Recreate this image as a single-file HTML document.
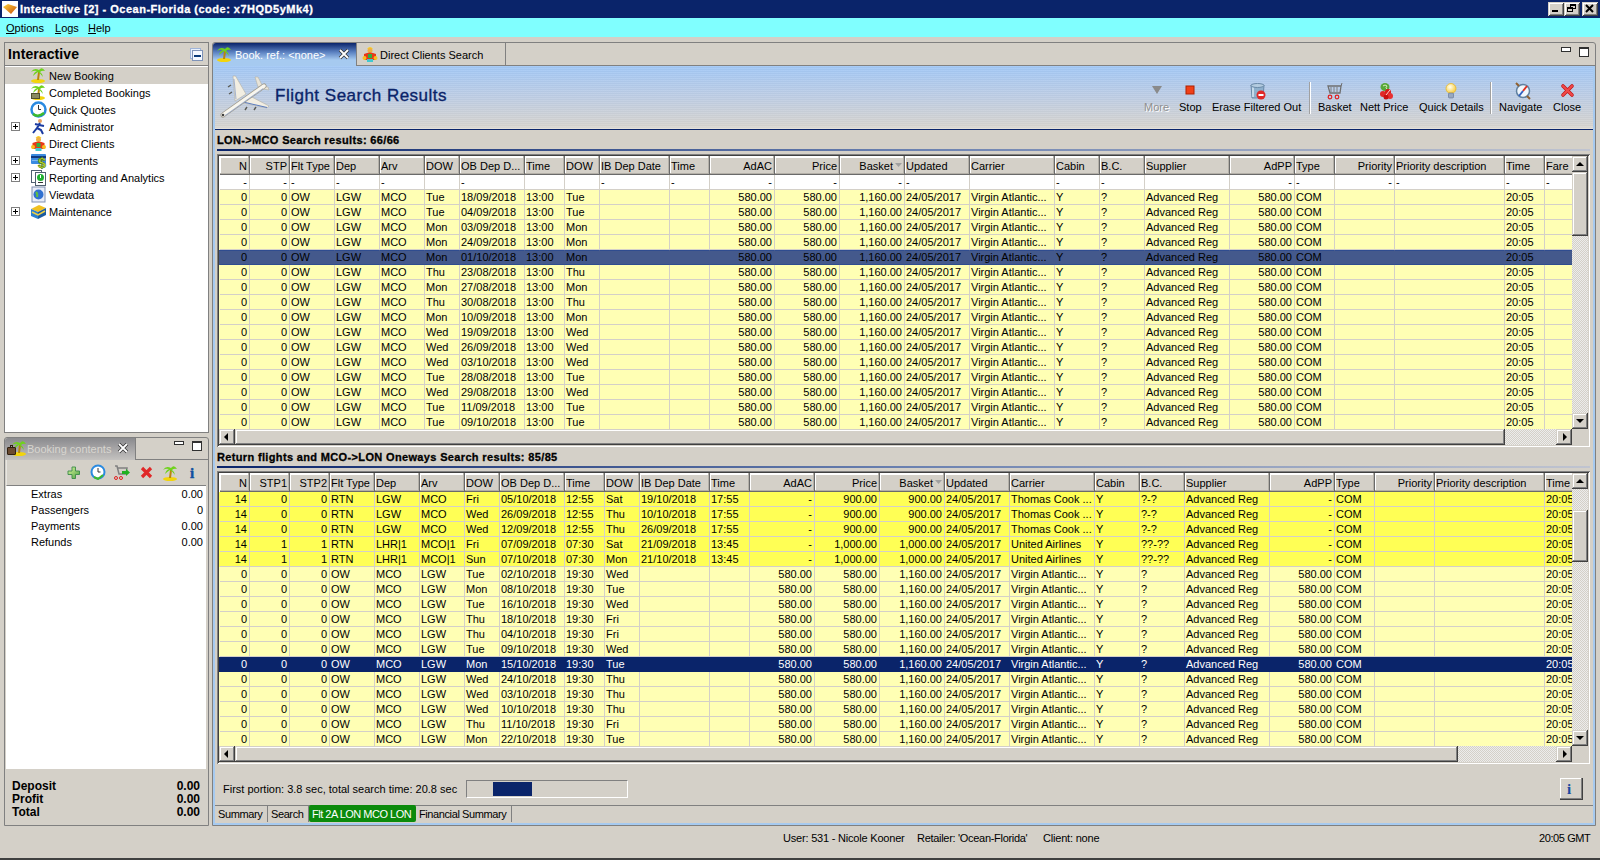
<!DOCTYPE html><html><head><meta charset="utf-8"><title>Interactive</title><style>
*{box-sizing:border-box;margin:0;padding:0}
html,body{width:1600px;height:860px;overflow:hidden}
body{position:relative;background:#d4d0c8;font-family:"Liberation Sans",sans-serif;font-size:11px;color:#000}
.a{position:absolute}
.t{position:absolute;white-space:nowrap;line-height:14px}
.b{font-weight:bold}
/* grid */
.g{position:absolute;overflow:hidden}
.hc{position:absolute;height:17px;background:#d4d0c8;border-top:1px solid #fff;border-left:1px solid #fff;border-right:1px solid #808080;border-bottom:1px solid #808080;box-shadow:1px 1px 0 #404040;white-space:nowrap;overflow:hidden;line-height:15px;padding:0 2px}
.r{position:absolute;left:0;height:15px;white-space:nowrap}
.c{position:absolute;top:0;height:15px;border-right:1px solid #d4d0c8;border-bottom:1px solid #d4d0c8;line-height:14px;padding:0 2px 0 1px;overflow:hidden}
.R{text-align:right}
.y1{background:#ffffb4}
.y2{background:#ffff55}
.wf{background:#fff}
.s1{background:#44598c;box-shadow:inset 0 1px 0 #2f4c8f}.s1 .c{border-right-color:#44598c;border-bottom-color:#2f4c8f}
.s2{background:#0a246a;color:#fff}.s2 .c{border-right-color:#0a246a;border-bottom-color:#0a246a}
.sb{position:absolute;background:#d4d0c8;border-top:1px solid #d4d0c8;border-left:1px solid #d4d0c8;box-shadow:inset -1px -1px 0 #404040, inset 1px 1px 0 #fff, inset -2px -2px 0 #808080}
.trk{position:absolute;background-color:#ececec;background-image:linear-gradient(45deg,#d4d0c8 25%,transparent 25%,transparent 75%,#d4d0c8 75%),linear-gradient(45deg,#d4d0c8 25%,transparent 25%,transparent 75%,#d4d0c8 75%);background-size:2px 2px;background-position:0 0,1px 1px}
</style></head><body><div class="a" style="left:0;top:0;width:1600px;height:18px;background:#0a246a"></div><div class="a" style="left:2px;top:1px;width:16px;height:16px;background:#fff"></div><svg class="a" style="left:2px;top:1px" width="16" height="16"><defs><linearGradient id="ig" x1="0" y1="0" x2="1" y2="1"><stop offset="0" stop-color="#ffd23a"/><stop offset="1" stop-color="#c8500a"/></linearGradient></defs><path d="M1 6 L6 3 L15 6 L9 13 Z" fill="url(#ig)"/></svg><div class="t b" style="left:20px;top:2px;color:#fff;font-size:11px;letter-spacing:0.5px;-webkit-text-stroke:0.3px #fff">Interactive [2] - Ocean-Florida (code: x7HQD5yMk4)</div><div class="sb" style="left:1548px;top:2px;width:16px;height:14px"></div><div class="a" style="left:1552px;top:10px;width:6px;height:2px;background:#000"></div><div class="sb" style="left:1564px;top:2px;width:16px;height:14px"></div><div class="a" style="left:1570px;top:4px;width:6px;height:5px;border:1px solid #000;border-top-width:2px"></div><div class="a" style="left:1567px;top:7px;width:6px;height:5px;border:1px solid #000;border-top-width:2px;background:#d4d0c8"></div><div class="sb" style="left:1582px;top:2px;width:16px;height:14px"></div><svg class="a" style="left:1582px;top:2px" width="16" height="14"><path d="M4 3 L11 10 M11 3 L4 10" stroke="#000" stroke-width="2"/></svg><div class="a" style="left:0;top:18px;width:1600px;height:19px;background:#80ffff"></div><div class="t" style="left:6px;top:21px"><u>O</u>ptions</div><div class="t" style="left:55px;top:21px"><u>L</u>ogs</div><div class="t" style="left:88px;top:21px"><u>H</u>elp</div><div class="a" style="left:0;top:858px;width:1600px;height:2px;background:#404040"></div><div class="a" style="left:4px;top:42px;width:205px;height:391px;border:1px solid #808080;background:#fff"></div><div class="a" style="left:5px;top:43px;width:203px;height:23px;background:#d4d0c8;border-bottom:1px solid #808080"></div><div class="t b" style="left:8px;top:46px;font-size:14px;line-height:16px;letter-spacing:0.1px">Interactive</div><div class="a" style="left:190px;top:48px;width:11px;height:11px;border:1px solid #9fb4d8;background:#e8f0fc"></div><div class="a" style="left:192px;top:50px;width:11px;height:11px;border:1px solid #7f93b8;background:#f4f8ff"></div><div class="a" style="left:194px;top:55px;width:7px;height:2px;background:#0a3a7a"></div><div class="a" style="left:5px;top:67px;width:203px;height:17px;background:#d4d0c8"></div><div class="t" style="left:49px;top:68px;line-height:16px">New Booking</div><svg class="a" style="left:30px;top:66px" width="16" height="17" viewBox="0 0 16 17"><ellipse cx="8" cy="15" rx="7" ry="2" fill="#f2d40c"/><path d="M8 14 L9 6" stroke="#b8860b" stroke-width="2"/><path d="M1 6 Q4 1 9 4 Q12 0 15 5 Q12 4 10 6 Q13 8 13 11 Q10 7 8 6 Q5 8 3 10 Q4 6 7 5 Q4 4 1 6Z" fill="#6fd21c"/></svg><div class="t" style="left:49px;top:85px;line-height:16px">Completed Bookings</div><svg class="a" style="left:30px;top:83px" width="16" height="17" viewBox="0 0 16 17"><ellipse cx="8" cy="15" rx="7" ry="2" fill="#f2d40c"/><path d="M8 14 L9 6" stroke="#b8860b" stroke-width="2"/><path d="M1 6 Q4 1 9 4 Q12 0 15 5 Q12 4 10 6 Q13 8 13 11 Q10 7 8 6 Q5 8 3 10 Q4 6 7 5 Q4 4 1 6Z" fill="#6fd21c"/></svg><div class="a" style="left:31px;top:93px;width:9px;height:6px;background:#8a8a60;border:1px solid #505030"></div><div class="t" style="left:49px;top:102px;line-height:16px">Quick Quotes</div><svg class="a" style="left:30px;top:101px" width="17" height="17"><circle cx="8.5" cy="8.5" r="7" fill="#fff" stroke="#2a8ae0" stroke-width="2.5"/><path d="M8.5 4 V8.5 H11" stroke="#333" stroke-width="1" fill="none"/><path d="M3 13 Q8 17 14 12" stroke="#3cba2c" stroke-width="2.5" fill="none"/></svg><div class="t" style="left:49px;top:119px;line-height:16px">Administrator</div><div class="a" style="left:11px;top:122px;width:9px;height:9px;border:1px solid #808080;background:#fff"></div><div class="a" style="left:13px;top:126px;width:5px;height:1px;background:#000"></div><div class="a" style="left:15px;top:124px;width:1px;height:5px;background:#000"></div><svg class="a" style="left:30px;top:118px" width="17" height="17"><circle cx="10" cy="3" r="2" fill="#e8a060"/><path d="M10 5 L7 10 L3 15 M7 10 L11 12 L13 16 M9 7 L14 8 M9 7 L5 6" stroke="#1a3aa0" stroke-width="2" fill="none"/></svg><div class="t" style="left:49px;top:136px;line-height:16px">Direct Clients</div><svg class="a" style="left:30px;top:135px" width="17" height="17"><path d="M5.5 3 Q8.5 -1 11.5 3 Z" fill="#f8d020"/><circle cx="8.5" cy="4.5" r="2.5" fill="#f0b040"/><path d="M2.5 8 Q8.5 5 14.5 8 L14.5 14 H2.5Z" fill="#e83818"/><circle cx="3" cy="12" r="2" fill="#f8c020"/><circle cx="14" cy="12" r="2" fill="#f8c020"/><rect x="6.5" y="8" width="4" height="4" fill="#30b040"/><rect x="5.5" y="13" width="6" height="3" fill="#40c8d0"/></svg><div class="t" style="left:49px;top:153px;line-height:16px">Payments</div><div class="a" style="left:11px;top:156px;width:9px;height:9px;border:1px solid #808080;background:#fff"></div><div class="a" style="left:13px;top:160px;width:5px;height:1px;background:#000"></div><div class="a" style="left:15px;top:158px;width:1px;height:5px;background:#000"></div><svg class="a" style="left:30px;top:152px" width="17" height="17"><rect x="1" y="2" width="15" height="10" rx="1" fill="#3a8ae0"/><rect x="1" y="4" width="15" height="2" fill="#103a80"/><rect x="2" y="8" width="6" height="1" fill="#80b8f0"/><text x="8" y="16" font-size="14" font-weight="bold" fill="#c8e030" stroke="#4a7a10" stroke-width="0.6" font-family="Liberation Sans">$</text></svg><div class="t" style="left:49px;top:170px;line-height:16px">Reporting and Analytics</div><div class="a" style="left:11px;top:173px;width:9px;height:9px;border:1px solid #808080;background:#fff"></div><div class="a" style="left:13px;top:177px;width:5px;height:1px;background:#000"></div><div class="a" style="left:15px;top:175px;width:1px;height:5px;background:#000"></div><svg class="a" style="left:30px;top:169px" width="17" height="17"><rect x="1.5" y="1.5" width="10" height="12" fill="#fff" stroke="#506070"/><rect x="5.5" y="3.5" width="10" height="13" fill="#fff" stroke="#506070"/><circle cx="10.5" cy="8.5" r="3.5" fill="#20b030"/><rect x="10" y="6" width="1" height="3" fill="#fff"/><rect x="8" y="13" width="5" height="1" fill="#303030"/></svg><div class="t" style="left:49px;top:187px;line-height:16px">Viewdata</div><svg class="a" style="left:30px;top:186px" width="17" height="17"><rect x="2" y="1" width="13" height="15" fill="#e8ecf8" stroke="#8090b0"/><circle cx="8.5" cy="8.5" r="5" fill="#3070d0"/><path d="M6 6 Q8 8 7 11" stroke="#60c040" stroke-width="2" fill="none"/></svg><div class="t" style="left:49px;top:204px;line-height:16px">Maintenance</div><div class="a" style="left:11px;top:207px;width:9px;height:9px;border:1px solid #808080;background:#fff"></div><div class="a" style="left:13px;top:211px;width:5px;height:1px;background:#000"></div><div class="a" style="left:15px;top:209px;width:1px;height:5px;background:#000"></div><svg class="a" style="left:30px;top:203px" width="17" height="17"><path d="M1 6 L9 2 L16 5 L8 9Z" fill="#f0c020"/><path d="M1 6 L8 9 L8 16 L1 13Z" fill="#2a80d0"/><path d="M8 9 L16 5 L16 12 L8 16Z" fill="#1a5aa0"/><path d="M2 9 L8 12 L15 8" stroke="#f0d040" stroke-width="1.5" fill="none"/></svg><div class="a" style="left:4px;top:437px;width:205px;height:389px;border:1px solid #808080;border-radius:3px 3px 0 0;background:#d4d0c8"></div><div class="a" style="left:5px;top:438px;width:130px;height:22px;background:linear-gradient(#8a8a8e,#c4c2c0);border-radius:3px 0 0 0"></div><div class="a" style="left:135px;top:438px;width:1px;height:22px;background:#808080"></div><div class="a" style="left:135px;top:459px;width:73px;height:1px;background:#808080"></div><svg class="a" style="left:11px;top:439px" width="16" height="17" viewBox="0 0 16 17"><ellipse cx="8" cy="15" rx="7" ry="2" fill="#f2d40c"/><path d="M8 14 L9 6" stroke="#b8860b" stroke-width="2"/><path d="M1 6 Q4 1 9 4 Q12 0 15 5 Q12 4 10 6 Q13 8 13 11 Q10 7 8 6 Q5 8 3 10 Q4 6 7 5 Q4 4 1 6Z" fill="#6fd21c"/></svg><div class="a" style="left:7px;top:447px;width:9px;height:8px;background:#6a4a30;border:1px solid #302010;border-radius:1px"></div><div class="a" style="left:10px;top:445px;width:3px;height:2px;border:1px solid #302010;border-bottom:none"></div><div class="t" style="left:27px;top:441px;color:#d8d6d0;line-height:16px">Booking contents</div><svg class="a" style="left:117px;top:442px" width="12" height="12"><path d="M2 2 L10 10 M10 2 L2 10" stroke="#303030" stroke-width="3.2"/><path d="M2 2 L10 10 M10 2 L2 10" stroke="#fff" stroke-width="1.8"/></svg><div class="a" style="left:174px;top:441px;width:10px;height:4px;border:1px solid #303030;background:#fff"></div><div class="a" style="left:192px;top:441px;width:10px;height:10px;border:1px solid #303030;border-top-width:2px;background:#fff"></div><div class="a" style="left:6px;top:460px;width:200px;height:26px;background:#d4d0c8;border-bottom:1px solid #808080;border-left:1px solid #e8e6e2"></div><svg class="a" style="left:67px;top:466px" width="14" height="14"><defs><linearGradient id="pg" x1="0" y1="0" x2="1" y2="1"><stop offset="0" stop-color="#e0f8a0"/><stop offset="1" stop-color="#48a040"/></linearGradient></defs><path d="M5 1 H8.5 V5 H12.5 V8.5 H8.5 V12.5 H5 V8.5 H1 V5 H5Z" fill="url(#pg)" stroke="#3a8a4a" stroke-width="0.9"/></svg><svg class="a" style="left:90px;top:464px" width="16" height="16"><circle cx="8" cy="8" r="6.5" fill="#fff" stroke="#2a8ae0" stroke-width="2"/><path d="M8 4 V8 H10.5" stroke="#333" fill="none"/><path d="M4 13 L8 15 L13 11" stroke="#3cba2c" stroke-width="2" fill="none"/></svg><svg class="a" style="left:114px;top:464px" width="16" height="16"><path d="M1 2 H3 L5 10 H12 L13 4 H4" stroke="#808080" stroke-width="1.5" fill="none"/><circle cx="2" cy="14" r="1.5" fill="none" stroke="#e02020"/><circle cx="7" cy="14" r="1.5" fill="none" stroke="#e02020"/><path d="M8 7 H12 V5 L16 8.5 L12 12 V10 H8Z" fill="#20b020"/></svg><svg class="a" style="left:140px;top:466px" width="13" height="13"><path d="M2 2 L11 11 M11 2 L2 11" stroke="#e02828" stroke-width="3.2"/></svg><svg class="a" style="left:162px;top:464px" width="16" height="17" viewBox="0 0 16 17"><ellipse cx="8" cy="15" rx="7" ry="2" fill="#f2d40c"/><path d="M8 14 L9 6" stroke="#b8860b" stroke-width="2"/><path d="M1 6 Q4 1 9 4 Q12 0 15 5 Q12 4 10 6 Q13 8 13 11 Q10 7 8 6 Q5 8 3 10 Q4 6 7 5 Q4 4 1 6Z" fill="#6fd21c"/></svg><div class="t b" style="left:190px;top:465px;color:#1050a0;font-size:15px;line-height:16px;font-family:'Liberation Serif',serif;-webkit-text-stroke:0.4px #1050a0">i</div><div class="a" style="left:6px;top:486px;width:200px;height:283px;background:#fff"></div><div class="t" style="left:31px;top:487px">Extras</div><div class="t" style="right:1397px;top:487px">0.00</div><div class="t" style="left:31px;top:503px">Passengers</div><div class="t" style="right:1397px;top:503px">0</div><div class="t" style="left:31px;top:519px">Payments</div><div class="t" style="right:1397px;top:519px">0.00</div><div class="t" style="left:31px;top:535px">Refunds</div><div class="t" style="right:1397px;top:535px">0.00</div><div class="t b" style="left:12px;top:779px;font-size:12px">Deposit</div><div class="t b" style="right:1400px;top:779px;font-size:12px">0.00</div><div class="t b" style="left:12px;top:792px;font-size:12px">Profit</div><div class="t b" style="right:1400px;top:792px;font-size:12px">0.00</div><div class="t b" style="left:12px;top:805px;font-size:12px">Total</div><div class="t b" style="right:1400px;top:805px;font-size:12px">0.00</div><div class="a" style="left:212px;top:42px;width:1384px;height:784px;border:1px solid #808080;border-radius:3px 3px 0 0;background:#d4d0c8"></div><div class="a" style="left:213px;top:65px;width:2px;height:760px;background:#a6caf0"></div><div class="a" style="left:1593px;top:65px;width:2px;height:760px;background:#a6caf0"></div><div class="a" style="left:213px;top:823px;width:1382px;height:2px;background:#a6caf0"></div><div class="a" style="left:356px;top:65px;width:1239px;height:1px;background:#808080"></div><div class="a" style="left:213px;top:43px;width:143px;height:23px;background:linear-gradient(#0a246a 0px,#5a80c0 9px,#a6caf0 17px,#a6caf0 23px);border-radius:3px 0 0 0"></div><svg class="a" style="left:216px;top:45px" width="16" height="17" viewBox="0 0 16 17"><ellipse cx="8" cy="15" rx="7" ry="2" fill="#f2d40c"/><path d="M8 14 L9 6" stroke="#b8860b" stroke-width="2"/><path d="M1 6 Q4 1 9 4 Q12 0 15 5 Q12 4 10 6 Q13 8 13 11 Q10 7 8 6 Q5 8 3 10 Q4 6 7 5 Q4 4 1 6Z" fill="#6fd21c"/></svg><div class="t" style="left:235px;top:47px;color:#fff;line-height:16px">Book. ref.: &lt;none&gt;</div><svg class="a" style="left:338px;top:48px" width="12" height="12"><path d="M2 2 L10 10 M10 2 L2 10" stroke="#303030" stroke-width="3.2"/><path d="M2 2 L10 10 M10 2 L2 10" stroke="#fff" stroke-width="1.8"/></svg><div class="a" style="left:356px;top:43px;width:150px;height:22px;border-left:1px solid #808080;border-right:1px solid #808080"></div><svg class="a" style="left:362px;top:46px" width="16" height="17"><path d="M5 3 Q8 -1 11 3 Z" fill="#f8d020"/><circle cx="8" cy="4.5" r="2.5" fill="#f0b040"/><path d="M2 8 Q8 5 14 8 L14 14 H2Z" fill="#e83818"/><circle cx="2.5" cy="12" r="2" fill="#f8c020"/><circle cx="13.5" cy="12" r="2" fill="#f8c020"/><rect x="6" y="8" width="4" height="4" fill="#30b040"/><rect x="5" y="13" width="6" height="3" fill="#40c8d0"/></svg><div class="t" style="left:380px;top:47px;line-height:16px">Direct Clients Search</div><div class="a" style="left:1561px;top:47px;width:10px;height:5px;border:1px solid #303030;background:#fff"></div><div class="a" style="left:1579px;top:47px;width:10px;height:10px;border:1px solid #303030;border-top-width:2px;background:#fff"></div><div class="a" style="left:215px;top:66px;width:1378px;height:63px;background:repeating-linear-gradient(rgba(255,255,255,0.07) 0 1px,rgba(0,0,0,0.02) 1px 2px),linear-gradient(#a2c8f6 0%,#bccde6 45%,#d6d4d0 95%,#e4e0d8 100%)"></div><div class="a" style="left:215px;top:129px;width:1378px;height:1px;background:#0a246a"></div><svg class="a" style="left:220px;top:74px" width="50" height="46" viewBox="0 0 50 46"><path d="M15 27 L13 2 L15.5 2 L26 20 Z" fill="#f2eee2" stroke="#b4b0a4" stroke-width="0.6"/><path d="M19 28 L28 21 L49 32 L47 34 Z" fill="#f2eee2" stroke="#b4b0a4" stroke-width="0.6"/><path d="M21 27.5 L47 33.5" stroke="#5a7cc0" stroke-width="1.1"/><path d="M16 25 L14 5" stroke="#6a88c0" stroke-width="0.8" opacity="0.7"/><path d="M38 13 L35 3 L38 3 L42 11 Z" fill="#e8e4d8" stroke="#b4b0a4" stroke-width="0.6"/><path d="M41 12 L48 13 L49 16 L43 15 Z" fill="#e8e4d8" stroke="#b4b0a4" stroke-width="0.6"/><path d="M3 41 L44 12" stroke="#a09c90" stroke-width="5" stroke-linecap="round"/><path d="M3 41 L44 12" stroke="#f8f6ee" stroke-width="3.4" stroke-linecap="round"/><path d="M5 41.5 L43 14.5" stroke="#5a7cc0" stroke-width="0.8" opacity="0.6"/><path d="M8 13 L11 11 M9 20 L12 18 M25 36 L27 33 M34 36 L36 33" stroke="#5a5a54" stroke-width="1.4"/><circle cx="3" cy="41" r="1.3" fill="#404040"/></svg><div class="t" style="left:275px;top:86px;color:#0a246a;font-size:17px;letter-spacing:0.5px;line-height:20px;-webkit-text-stroke:0.35px #0a246a">Flight Search Results</div><div class="t" style="left:1144px;top:100px;color:#909090;text-shadow:1px 1px 0 #fff;">More</div><svg class="a" style="left:1149px;top:82px" width="16" height="16"><path d="M3 4 H13 L8 12Z" fill="#8a8a8a"/></svg><div class="t" style="left:1179px;top:100px;color:#000;">Stop</div><svg class="a" style="left:1182px;top:82px" width="16" height="16"><rect x="4" y="4" width="8" height="8" fill="#f04018" stroke="#b02000"/></svg><div class="t" style="left:1212px;top:100px;color:#000;">Erase Filtered Out</div><svg class="a" style="left:1249px;top:82px" width="20" height="20"><path d="M2 3 H15 L14 16 H3Z" fill="#8eb0cc" stroke="#6a8aa8"/><path d="M4 5 V15" stroke="#d8e8f4" stroke-width="1.5"/><ellipse cx="8.5" cy="3.5" rx="6.5" ry="2" fill="#b4cce0" stroke="#6a8aa8"/><circle cx="12" cy="13" r="4.5" fill="#e02828"/><rect x="9.5" y="12" width="5" height="2" fill="#fff"/></svg><div class="t" style="left:1318px;top:100px;color:#000;">Basket</div><svg class="a" style="left:1326px;top:82px" width="18" height="18"><path d="M2 4 H15 L14 11 H4Z" fill="none" stroke="#707070" stroke-width="1.3"/><path d="M5 5 V10 M8 5 V10 M11 5 V10" stroke="#808080"/><path d="M15 4 L16 1" stroke="#707070"/><circle cx="4" cy="15" r="1.8" fill="none" stroke="#e02020" stroke-width="1.2"/><circle cx="11" cy="15" r="1.8" fill="none" stroke="#e02020" stroke-width="1.2"/></svg><div class="t" style="left:1360px;top:100px;color:#000;">Nett Price</div><svg class="a" style="left:1377px;top:82px" width="18" height="18"><ellipse cx="8" cy="5" rx="4.5" ry="4" fill="#58a838"/><path d="M6 4 Q8 2 10 4 Q8 6 10 7" stroke="#d8f0c0" stroke-width="1" fill="none"/><circle cx="6" cy="12" r="3" fill="#e02828"/><circle cx="11" cy="10" r="3" fill="#d81818"/><circle cx="13" cy="14" r="3" fill="#e83030"/><circle cx="9" cy="15" r="2.5" fill="#c81010"/><path d="M9 13 L13 8" stroke="#ffd0d0" stroke-width="1"/></svg><div class="t" style="left:1419px;top:100px;color:#000;">Quick Details</div><svg class="a" style="left:1443px;top:82px" width="16" height="18"><defs><radialGradient id="bg1" cx="0.4" cy="0.35" r="0.7"><stop offset="0" stop-color="#fffff0"/><stop offset="1" stop-color="#f8c830"/></radialGradient></defs><circle cx="8" cy="6.5" r="5" fill="url(#bg1)" stroke="#e8b828" stroke-width="0.8"/><rect x="5.5" y="11" width="5" height="5" rx="1" fill="#98a8c0" stroke="#607090" stroke-width="0.6"/></svg><div class="t" style="left:1499px;top:100px;color:#000;">Navigate</div><svg class="a" style="left:1514px;top:82px" width="18" height="18"><circle cx="9" cy="9" r="6.5" fill="#f0f6fc" stroke="#6080a0" stroke-width="1.5"/><path d="M9 9 L13 4" stroke="#e03020" stroke-width="2"/><path d="M9 9 L5 14" stroke="#3060c0" stroke-width="2"/><path d="M2 1 L5 4 M16 17 L13 14" stroke="#906030" stroke-width="2"/></svg><div class="t" style="left:1553px;top:100px;color:#000;">Close</div><svg class="a" style="left:1559px;top:82px" width="16" height="16"><path d="M4 4 L13 13 M13 4 L4 13" stroke="#c01818" stroke-width="3.6" stroke-linecap="round"/><path d="M4 4 L13 13 M13 4 L4 13" stroke="#f04848" stroke-width="2.2" stroke-linecap="round"/></svg><div class="a" style="left:1309px;top:82px;width:1px;height:32px;background:#a0a0a0;box-shadow:1px 0 0 #fff"></div><div class="a" style="left:1490px;top:82px;width:1px;height:32px;background:#a0a0a0;box-shadow:1px 0 0 #fff"></div><div class="a" style="left:217px;top:154px;width:1373px;height:293px;background:#fff;box-shadow:inset 1px 1px 0 #808080, inset -1px -1px 0 #fff, inset 2px 2px 0 #404040, inset -2px -2px 0 #d4d0c8"></div><div class="g" style="left:219px;top:156px;width:1353px;height:273px"><div class="a" style="left:1px;top:0;width:30px;height:19px;background:#d4d0c8;box-shadow:inset -1px -1px 0 #6a6a6a, inset -2px -2px 0 #b4b0a8, inset 1px 2px 0 #fff;text-align:right;line-height:18px;padding:1px 3px 0 1px;white-space:nowrap;overflow:hidden">N</div><div class="a" style="left:31px;top:0;width:40px;height:19px;background:#d4d0c8;box-shadow:inset -1px -1px 0 #6a6a6a, inset -2px -2px 0 #b4b0a8, inset 1px 2px 0 #fff;text-align:right;line-height:18px;padding:1px 3px 0 1px;white-space:nowrap;overflow:hidden">STP</div><div class="a" style="left:71px;top:0;width:45px;height:19px;background:#d4d0c8;box-shadow:inset -1px -1px 0 #6a6a6a, inset -2px -2px 0 #b4b0a8, inset 1px 2px 0 #fff;line-height:18px;padding:1px 3px 0 1px;white-space:nowrap;overflow:hidden">Flt Type</div><div class="a" style="left:116px;top:0;width:45px;height:19px;background:#d4d0c8;box-shadow:inset -1px -1px 0 #6a6a6a, inset -2px -2px 0 #b4b0a8, inset 1px 2px 0 #fff;line-height:18px;padding:1px 3px 0 1px;white-space:nowrap;overflow:hidden">Dep</div><div class="a" style="left:161px;top:0;width:45px;height:19px;background:#d4d0c8;box-shadow:inset -1px -1px 0 #6a6a6a, inset -2px -2px 0 #b4b0a8, inset 1px 2px 0 #fff;line-height:18px;padding:1px 3px 0 1px;white-space:nowrap;overflow:hidden">Arv</div><div class="a" style="left:206px;top:0;width:35px;height:19px;background:#d4d0c8;box-shadow:inset -1px -1px 0 #6a6a6a, inset -2px -2px 0 #b4b0a8, inset 1px 2px 0 #fff;line-height:18px;padding:1px 3px 0 1px;white-space:nowrap;overflow:hidden">DOW</div><div class="a" style="left:241px;top:0;width:65px;height:19px;background:#d4d0c8;box-shadow:inset -1px -1px 0 #6a6a6a, inset -2px -2px 0 #b4b0a8, inset 1px 2px 0 #fff;line-height:18px;padding:1px 3px 0 1px;white-space:nowrap;overflow:hidden">OB Dep D...</div><div class="a" style="left:306px;top:0;width:40px;height:19px;background:#d4d0c8;box-shadow:inset -1px -1px 0 #6a6a6a, inset -2px -2px 0 #b4b0a8, inset 1px 2px 0 #fff;line-height:18px;padding:1px 3px 0 1px;white-space:nowrap;overflow:hidden">Time</div><div class="a" style="left:346px;top:0;width:35px;height:19px;background:#d4d0c8;box-shadow:inset -1px -1px 0 #6a6a6a, inset -2px -2px 0 #b4b0a8, inset 1px 2px 0 #fff;line-height:18px;padding:1px 3px 0 1px;white-space:nowrap;overflow:hidden">DOW</div><div class="a" style="left:381px;top:0;width:70px;height:19px;background:#d4d0c8;box-shadow:inset -1px -1px 0 #6a6a6a, inset -2px -2px 0 #b4b0a8, inset 1px 2px 0 #fff;line-height:18px;padding:1px 3px 0 1px;white-space:nowrap;overflow:hidden">IB Dep Date</div><div class="a" style="left:451px;top:0;width:40px;height:19px;background:#d4d0c8;box-shadow:inset -1px -1px 0 #6a6a6a, inset -2px -2px 0 #b4b0a8, inset 1px 2px 0 #fff;line-height:18px;padding:1px 3px 0 1px;white-space:nowrap;overflow:hidden">Time</div><div class="a" style="left:491px;top:0;width:65px;height:19px;background:#d4d0c8;box-shadow:inset -1px -1px 0 #6a6a6a, inset -2px -2px 0 #b4b0a8, inset 1px 2px 0 #fff;text-align:right;line-height:18px;padding:1px 3px 0 1px;white-space:nowrap;overflow:hidden">AdAC</div><div class="a" style="left:556px;top:0;width:65px;height:19px;background:#d4d0c8;box-shadow:inset -1px -1px 0 #6a6a6a, inset -2px -2px 0 #b4b0a8, inset 1px 2px 0 #fff;text-align:right;line-height:18px;padding:1px 3px 0 1px;white-space:nowrap;overflow:hidden">Price</div><div class="a" style="left:621px;top:0;width:65px;height:19px;background:#d4d0c8;box-shadow:inset -1px -1px 0 #6a6a6a, inset -2px -2px 0 #b4b0a8, inset 1px 2px 0 #fff;text-align:right;line-height:18px;padding:1px 12px 0 1px;white-space:nowrap;overflow:hidden">Basket</div><svg class="a" style="left:676px;top:7px" width="8" height="6"><path d="M0 0 H7 L3.5 4Z" fill="#a0a0a0"/></svg><div class="a" style="left:686px;top:0;width:65px;height:19px;background:#d4d0c8;box-shadow:inset -1px -1px 0 #6a6a6a, inset -2px -2px 0 #b4b0a8, inset 1px 2px 0 #fff;line-height:18px;padding:1px 3px 0 1px;white-space:nowrap;overflow:hidden">Updated</div><div class="a" style="left:751px;top:0;width:85px;height:19px;background:#d4d0c8;box-shadow:inset -1px -1px 0 #6a6a6a, inset -2px -2px 0 #b4b0a8, inset 1px 2px 0 #fff;line-height:18px;padding:1px 3px 0 1px;white-space:nowrap;overflow:hidden">Carrier</div><div class="a" style="left:836px;top:0;width:45px;height:19px;background:#d4d0c8;box-shadow:inset -1px -1px 0 #6a6a6a, inset -2px -2px 0 #b4b0a8, inset 1px 2px 0 #fff;line-height:18px;padding:1px 3px 0 1px;white-space:nowrap;overflow:hidden">Cabin</div><div class="a" style="left:881px;top:0;width:45px;height:19px;background:#d4d0c8;box-shadow:inset -1px -1px 0 #6a6a6a, inset -2px -2px 0 #b4b0a8, inset 1px 2px 0 #fff;line-height:18px;padding:1px 3px 0 1px;white-space:nowrap;overflow:hidden">B.C.</div><div class="a" style="left:926px;top:0;width:85px;height:19px;background:#d4d0c8;box-shadow:inset -1px -1px 0 #6a6a6a, inset -2px -2px 0 #b4b0a8, inset 1px 2px 0 #fff;line-height:18px;padding:1px 3px 0 1px;white-space:nowrap;overflow:hidden">Supplier</div><div class="a" style="left:1011px;top:0;width:65px;height:19px;background:#d4d0c8;box-shadow:inset -1px -1px 0 #6a6a6a, inset -2px -2px 0 #b4b0a8, inset 1px 2px 0 #fff;text-align:right;line-height:18px;padding:1px 3px 0 1px;white-space:nowrap;overflow:hidden">AdPP</div><div class="a" style="left:1076px;top:0;width:40px;height:19px;background:#d4d0c8;box-shadow:inset -1px -1px 0 #6a6a6a, inset -2px -2px 0 #b4b0a8, inset 1px 2px 0 #fff;line-height:18px;padding:1px 3px 0 1px;white-space:nowrap;overflow:hidden">Type</div><div class="a" style="left:1116px;top:0;width:60px;height:19px;background:#d4d0c8;box-shadow:inset -1px -1px 0 #6a6a6a, inset -2px -2px 0 #b4b0a8, inset 1px 2px 0 #fff;text-align:right;line-height:18px;padding:1px 3px 0 1px;white-space:nowrap;overflow:hidden">Priority</div><div class="a" style="left:1176px;top:0;width:110px;height:19px;background:#d4d0c8;box-shadow:inset -1px -1px 0 #6a6a6a, inset -2px -2px 0 #b4b0a8, inset 1px 2px 0 #fff;line-height:18px;padding:1px 3px 0 1px;white-space:nowrap;overflow:hidden">Priority description</div><div class="a" style="left:1286px;top:0;width:40px;height:19px;background:#d4d0c8;box-shadow:inset -1px -1px 0 #6a6a6a, inset -2px -2px 0 #b4b0a8, inset 1px 2px 0 #fff;line-height:18px;padding:1px 3px 0 1px;white-space:nowrap;overflow:hidden">Time</div><div class="a" style="left:1326px;top:0;width:50px;height:19px;background:#d4d0c8;box-shadow:inset -1px -1px 0 #6a6a6a, inset -2px -2px 0 #b4b0a8, inset 1px 2px 0 #fff;line-height:18px;padding:1px 3px 0 1px;white-space:nowrap;overflow:hidden">Fare</div><div class="r wf" style="top:19px;width:1400px"><div class="c R" style="left:1px;width:30px">-</div><div class="c R" style="left:31px;width:40px">-</div><div class="c" style="left:71px;width:45px">-</div><div class="c" style="left:116px;width:45px">-</div><div class="c" style="left:161px;width:45px">-</div><div class="c" style="left:206px;width:35px"></div><div class="c" style="left:241px;width:65px">-</div><div class="c" style="left:306px;width:40px"></div><div class="c" style="left:346px;width:35px"></div><div class="c" style="left:381px;width:70px">-</div><div class="c" style="left:451px;width:40px">-</div><div class="c R" style="left:491px;width:65px">-</div><div class="c R" style="left:556px;width:65px">-</div><div class="c R" style="left:621px;width:65px">-</div><div class="c" style="left:686px;width:65px">-</div><div class="c" style="left:751px;width:85px"></div><div class="c" style="left:836px;width:45px">-</div><div class="c" style="left:881px;width:45px">-</div><div class="c" style="left:926px;width:85px"></div><div class="c R" style="left:1011px;width:65px">-</div><div class="c" style="left:1076px;width:40px">-</div><div class="c R" style="left:1116px;width:60px">-</div><div class="c" style="left:1176px;width:110px">-</div><div class="c" style="left:1286px;width:40px">-</div><div class="c" style="left:1326px;width:50px">-</div></div><div class="r y1" style="top:34px;width:1400px"><div class="c R" style="left:1px;width:30px">0</div><div class="c R" style="left:31px;width:40px">0</div><div class="c" style="left:71px;width:45px">OW</div><div class="c" style="left:116px;width:45px">LGW</div><div class="c" style="left:161px;width:45px">MCO</div><div class="c" style="left:206px;width:35px">Tue</div><div class="c" style="left:241px;width:65px">18/09/2018</div><div class="c" style="left:306px;width:40px">13:00</div><div class="c" style="left:346px;width:35px">Tue</div><div class="c" style="left:381px;width:70px"></div><div class="c" style="left:451px;width:40px"></div><div class="c R" style="left:491px;width:65px">580.00</div><div class="c R" style="left:556px;width:65px">580.00</div><div class="c R" style="left:621px;width:65px">1,160.00</div><div class="c" style="left:686px;width:65px">24/05/2017</div><div class="c" style="left:751px;width:85px">Virgin Atlantic...</div><div class="c" style="left:836px;width:45px">Y</div><div class="c" style="left:881px;width:45px">?</div><div class="c" style="left:926px;width:85px">Advanced Reg</div><div class="c R" style="left:1011px;width:65px">580.00</div><div class="c" style="left:1076px;width:40px">COM</div><div class="c R" style="left:1116px;width:60px"></div><div class="c" style="left:1176px;width:110px"></div><div class="c" style="left:1286px;width:40px">20:05</div><div class="c" style="left:1326px;width:50px"></div></div><div class="r y1" style="top:49px;width:1400px"><div class="c R" style="left:1px;width:30px">0</div><div class="c R" style="left:31px;width:40px">0</div><div class="c" style="left:71px;width:45px">OW</div><div class="c" style="left:116px;width:45px">LGW</div><div class="c" style="left:161px;width:45px">MCO</div><div class="c" style="left:206px;width:35px">Tue</div><div class="c" style="left:241px;width:65px">04/09/2018</div><div class="c" style="left:306px;width:40px">13:00</div><div class="c" style="left:346px;width:35px">Tue</div><div class="c" style="left:381px;width:70px"></div><div class="c" style="left:451px;width:40px"></div><div class="c R" style="left:491px;width:65px">580.00</div><div class="c R" style="left:556px;width:65px">580.00</div><div class="c R" style="left:621px;width:65px">1,160.00</div><div class="c" style="left:686px;width:65px">24/05/2017</div><div class="c" style="left:751px;width:85px">Virgin Atlantic...</div><div class="c" style="left:836px;width:45px">Y</div><div class="c" style="left:881px;width:45px">?</div><div class="c" style="left:926px;width:85px">Advanced Reg</div><div class="c R" style="left:1011px;width:65px">580.00</div><div class="c" style="left:1076px;width:40px">COM</div><div class="c R" style="left:1116px;width:60px"></div><div class="c" style="left:1176px;width:110px"></div><div class="c" style="left:1286px;width:40px">20:05</div><div class="c" style="left:1326px;width:50px"></div></div><div class="r y1" style="top:64px;width:1400px"><div class="c R" style="left:1px;width:30px">0</div><div class="c R" style="left:31px;width:40px">0</div><div class="c" style="left:71px;width:45px">OW</div><div class="c" style="left:116px;width:45px">LGW</div><div class="c" style="left:161px;width:45px">MCO</div><div class="c" style="left:206px;width:35px">Mon</div><div class="c" style="left:241px;width:65px">03/09/2018</div><div class="c" style="left:306px;width:40px">13:00</div><div class="c" style="left:346px;width:35px">Mon</div><div class="c" style="left:381px;width:70px"></div><div class="c" style="left:451px;width:40px"></div><div class="c R" style="left:491px;width:65px">580.00</div><div class="c R" style="left:556px;width:65px">580.00</div><div class="c R" style="left:621px;width:65px">1,160.00</div><div class="c" style="left:686px;width:65px">24/05/2017</div><div class="c" style="left:751px;width:85px">Virgin Atlantic...</div><div class="c" style="left:836px;width:45px">Y</div><div class="c" style="left:881px;width:45px">?</div><div class="c" style="left:926px;width:85px">Advanced Reg</div><div class="c R" style="left:1011px;width:65px">580.00</div><div class="c" style="left:1076px;width:40px">COM</div><div class="c R" style="left:1116px;width:60px"></div><div class="c" style="left:1176px;width:110px"></div><div class="c" style="left:1286px;width:40px">20:05</div><div class="c" style="left:1326px;width:50px"></div></div><div class="r y1" style="top:79px;width:1400px"><div class="c R" style="left:1px;width:30px">0</div><div class="c R" style="left:31px;width:40px">0</div><div class="c" style="left:71px;width:45px">OW</div><div class="c" style="left:116px;width:45px">LGW</div><div class="c" style="left:161px;width:45px">MCO</div><div class="c" style="left:206px;width:35px">Mon</div><div class="c" style="left:241px;width:65px">24/09/2018</div><div class="c" style="left:306px;width:40px">13:00</div><div class="c" style="left:346px;width:35px">Mon</div><div class="c" style="left:381px;width:70px"></div><div class="c" style="left:451px;width:40px"></div><div class="c R" style="left:491px;width:65px">580.00</div><div class="c R" style="left:556px;width:65px">580.00</div><div class="c R" style="left:621px;width:65px">1,160.00</div><div class="c" style="left:686px;width:65px">24/05/2017</div><div class="c" style="left:751px;width:85px">Virgin Atlantic...</div><div class="c" style="left:836px;width:45px">Y</div><div class="c" style="left:881px;width:45px">?</div><div class="c" style="left:926px;width:85px">Advanced Reg</div><div class="c R" style="left:1011px;width:65px">580.00</div><div class="c" style="left:1076px;width:40px">COM</div><div class="c R" style="left:1116px;width:60px"></div><div class="c" style="left:1176px;width:110px"></div><div class="c" style="left:1286px;width:40px">20:05</div><div class="c" style="left:1326px;width:50px"></div></div><div class="r s1" style="top:94px;width:1400px"><div class="c R" style="left:1px;width:30px">0</div><div class="c R" style="left:31px;width:40px">0</div><div class="c" style="left:71px;width:45px">OW</div><div class="c" style="left:116px;width:45px">LGW</div><div class="c" style="left:161px;width:45px">MCO</div><div class="c" style="left:206px;width:35px">Mon</div><div class="c" style="left:241px;width:65px">01/10/2018</div><div class="c" style="left:306px;width:40px">13:00</div><div class="c" style="left:346px;width:35px">Mon</div><div class="c" style="left:381px;width:70px"></div><div class="c" style="left:451px;width:40px"></div><div class="c R" style="left:491px;width:65px">580.00</div><div class="c R" style="left:556px;width:65px">580.00</div><div class="c R" style="left:621px;width:65px">1,160.00</div><div class="c" style="left:686px;width:65px">24/05/2017</div><div class="c" style="left:751px;width:85px">Virgin Atlantic...</div><div class="c" style="left:836px;width:45px">Y</div><div class="c" style="left:881px;width:45px">?</div><div class="c" style="left:926px;width:85px">Advanced Reg</div><div class="c R" style="left:1011px;width:65px">580.00</div><div class="c" style="left:1076px;width:40px">COM</div><div class="c R" style="left:1116px;width:60px"></div><div class="c" style="left:1176px;width:110px"></div><div class="c" style="left:1286px;width:40px">20:05</div><div class="c" style="left:1326px;width:50px"></div></div><div class="r y1" style="top:109px;width:1400px"><div class="c R" style="left:1px;width:30px">0</div><div class="c R" style="left:31px;width:40px">0</div><div class="c" style="left:71px;width:45px">OW</div><div class="c" style="left:116px;width:45px">LGW</div><div class="c" style="left:161px;width:45px">MCO</div><div class="c" style="left:206px;width:35px">Thu</div><div class="c" style="left:241px;width:65px">23/08/2018</div><div class="c" style="left:306px;width:40px">13:00</div><div class="c" style="left:346px;width:35px">Thu</div><div class="c" style="left:381px;width:70px"></div><div class="c" style="left:451px;width:40px"></div><div class="c R" style="left:491px;width:65px">580.00</div><div class="c R" style="left:556px;width:65px">580.00</div><div class="c R" style="left:621px;width:65px">1,160.00</div><div class="c" style="left:686px;width:65px">24/05/2017</div><div class="c" style="left:751px;width:85px">Virgin Atlantic...</div><div class="c" style="left:836px;width:45px">Y</div><div class="c" style="left:881px;width:45px">?</div><div class="c" style="left:926px;width:85px">Advanced Reg</div><div class="c R" style="left:1011px;width:65px">580.00</div><div class="c" style="left:1076px;width:40px">COM</div><div class="c R" style="left:1116px;width:60px"></div><div class="c" style="left:1176px;width:110px"></div><div class="c" style="left:1286px;width:40px">20:05</div><div class="c" style="left:1326px;width:50px"></div></div><div class="r y1" style="top:124px;width:1400px"><div class="c R" style="left:1px;width:30px">0</div><div class="c R" style="left:31px;width:40px">0</div><div class="c" style="left:71px;width:45px">OW</div><div class="c" style="left:116px;width:45px">LGW</div><div class="c" style="left:161px;width:45px">MCO</div><div class="c" style="left:206px;width:35px">Mon</div><div class="c" style="left:241px;width:65px">27/08/2018</div><div class="c" style="left:306px;width:40px">13:00</div><div class="c" style="left:346px;width:35px">Mon</div><div class="c" style="left:381px;width:70px"></div><div class="c" style="left:451px;width:40px"></div><div class="c R" style="left:491px;width:65px">580.00</div><div class="c R" style="left:556px;width:65px">580.00</div><div class="c R" style="left:621px;width:65px">1,160.00</div><div class="c" style="left:686px;width:65px">24/05/2017</div><div class="c" style="left:751px;width:85px">Virgin Atlantic...</div><div class="c" style="left:836px;width:45px">Y</div><div class="c" style="left:881px;width:45px">?</div><div class="c" style="left:926px;width:85px">Advanced Reg</div><div class="c R" style="left:1011px;width:65px">580.00</div><div class="c" style="left:1076px;width:40px">COM</div><div class="c R" style="left:1116px;width:60px"></div><div class="c" style="left:1176px;width:110px"></div><div class="c" style="left:1286px;width:40px">20:05</div><div class="c" style="left:1326px;width:50px"></div></div><div class="r y1" style="top:139px;width:1400px"><div class="c R" style="left:1px;width:30px">0</div><div class="c R" style="left:31px;width:40px">0</div><div class="c" style="left:71px;width:45px">OW</div><div class="c" style="left:116px;width:45px">LGW</div><div class="c" style="left:161px;width:45px">MCO</div><div class="c" style="left:206px;width:35px">Thu</div><div class="c" style="left:241px;width:65px">30/08/2018</div><div class="c" style="left:306px;width:40px">13:00</div><div class="c" style="left:346px;width:35px">Thu</div><div class="c" style="left:381px;width:70px"></div><div class="c" style="left:451px;width:40px"></div><div class="c R" style="left:491px;width:65px">580.00</div><div class="c R" style="left:556px;width:65px">580.00</div><div class="c R" style="left:621px;width:65px">1,160.00</div><div class="c" style="left:686px;width:65px">24/05/2017</div><div class="c" style="left:751px;width:85px">Virgin Atlantic...</div><div class="c" style="left:836px;width:45px">Y</div><div class="c" style="left:881px;width:45px">?</div><div class="c" style="left:926px;width:85px">Advanced Reg</div><div class="c R" style="left:1011px;width:65px">580.00</div><div class="c" style="left:1076px;width:40px">COM</div><div class="c R" style="left:1116px;width:60px"></div><div class="c" style="left:1176px;width:110px"></div><div class="c" style="left:1286px;width:40px">20:05</div><div class="c" style="left:1326px;width:50px"></div></div><div class="r y1" style="top:154px;width:1400px"><div class="c R" style="left:1px;width:30px">0</div><div class="c R" style="left:31px;width:40px">0</div><div class="c" style="left:71px;width:45px">OW</div><div class="c" style="left:116px;width:45px">LGW</div><div class="c" style="left:161px;width:45px">MCO</div><div class="c" style="left:206px;width:35px">Mon</div><div class="c" style="left:241px;width:65px">10/09/2018</div><div class="c" style="left:306px;width:40px">13:00</div><div class="c" style="left:346px;width:35px">Mon</div><div class="c" style="left:381px;width:70px"></div><div class="c" style="left:451px;width:40px"></div><div class="c R" style="left:491px;width:65px">580.00</div><div class="c R" style="left:556px;width:65px">580.00</div><div class="c R" style="left:621px;width:65px">1,160.00</div><div class="c" style="left:686px;width:65px">24/05/2017</div><div class="c" style="left:751px;width:85px">Virgin Atlantic...</div><div class="c" style="left:836px;width:45px">Y</div><div class="c" style="left:881px;width:45px">?</div><div class="c" style="left:926px;width:85px">Advanced Reg</div><div class="c R" style="left:1011px;width:65px">580.00</div><div class="c" style="left:1076px;width:40px">COM</div><div class="c R" style="left:1116px;width:60px"></div><div class="c" style="left:1176px;width:110px"></div><div class="c" style="left:1286px;width:40px">20:05</div><div class="c" style="left:1326px;width:50px"></div></div><div class="r y1" style="top:169px;width:1400px"><div class="c R" style="left:1px;width:30px">0</div><div class="c R" style="left:31px;width:40px">0</div><div class="c" style="left:71px;width:45px">OW</div><div class="c" style="left:116px;width:45px">LGW</div><div class="c" style="left:161px;width:45px">MCO</div><div class="c" style="left:206px;width:35px">Wed</div><div class="c" style="left:241px;width:65px">19/09/2018</div><div class="c" style="left:306px;width:40px">13:00</div><div class="c" style="left:346px;width:35px">Wed</div><div class="c" style="left:381px;width:70px"></div><div class="c" style="left:451px;width:40px"></div><div class="c R" style="left:491px;width:65px">580.00</div><div class="c R" style="left:556px;width:65px">580.00</div><div class="c R" style="left:621px;width:65px">1,160.00</div><div class="c" style="left:686px;width:65px">24/05/2017</div><div class="c" style="left:751px;width:85px">Virgin Atlantic...</div><div class="c" style="left:836px;width:45px">Y</div><div class="c" style="left:881px;width:45px">?</div><div class="c" style="left:926px;width:85px">Advanced Reg</div><div class="c R" style="left:1011px;width:65px">580.00</div><div class="c" style="left:1076px;width:40px">COM</div><div class="c R" style="left:1116px;width:60px"></div><div class="c" style="left:1176px;width:110px"></div><div class="c" style="left:1286px;width:40px">20:05</div><div class="c" style="left:1326px;width:50px"></div></div><div class="r y1" style="top:184px;width:1400px"><div class="c R" style="left:1px;width:30px">0</div><div class="c R" style="left:31px;width:40px">0</div><div class="c" style="left:71px;width:45px">OW</div><div class="c" style="left:116px;width:45px">LGW</div><div class="c" style="left:161px;width:45px">MCO</div><div class="c" style="left:206px;width:35px">Wed</div><div class="c" style="left:241px;width:65px">26/09/2018</div><div class="c" style="left:306px;width:40px">13:00</div><div class="c" style="left:346px;width:35px">Wed</div><div class="c" style="left:381px;width:70px"></div><div class="c" style="left:451px;width:40px"></div><div class="c R" style="left:491px;width:65px">580.00</div><div class="c R" style="left:556px;width:65px">580.00</div><div class="c R" style="left:621px;width:65px">1,160.00</div><div class="c" style="left:686px;width:65px">24/05/2017</div><div class="c" style="left:751px;width:85px">Virgin Atlantic...</div><div class="c" style="left:836px;width:45px">Y</div><div class="c" style="left:881px;width:45px">?</div><div class="c" style="left:926px;width:85px">Advanced Reg</div><div class="c R" style="left:1011px;width:65px">580.00</div><div class="c" style="left:1076px;width:40px">COM</div><div class="c R" style="left:1116px;width:60px"></div><div class="c" style="left:1176px;width:110px"></div><div class="c" style="left:1286px;width:40px">20:05</div><div class="c" style="left:1326px;width:50px"></div></div><div class="r y1" style="top:199px;width:1400px"><div class="c R" style="left:1px;width:30px">0</div><div class="c R" style="left:31px;width:40px">0</div><div class="c" style="left:71px;width:45px">OW</div><div class="c" style="left:116px;width:45px">LGW</div><div class="c" style="left:161px;width:45px">MCO</div><div class="c" style="left:206px;width:35px">Wed</div><div class="c" style="left:241px;width:65px">03/10/2018</div><div class="c" style="left:306px;width:40px">13:00</div><div class="c" style="left:346px;width:35px">Wed</div><div class="c" style="left:381px;width:70px"></div><div class="c" style="left:451px;width:40px"></div><div class="c R" style="left:491px;width:65px">580.00</div><div class="c R" style="left:556px;width:65px">580.00</div><div class="c R" style="left:621px;width:65px">1,160.00</div><div class="c" style="left:686px;width:65px">24/05/2017</div><div class="c" style="left:751px;width:85px">Virgin Atlantic...</div><div class="c" style="left:836px;width:45px">Y</div><div class="c" style="left:881px;width:45px">?</div><div class="c" style="left:926px;width:85px">Advanced Reg</div><div class="c R" style="left:1011px;width:65px">580.00</div><div class="c" style="left:1076px;width:40px">COM</div><div class="c R" style="left:1116px;width:60px"></div><div class="c" style="left:1176px;width:110px"></div><div class="c" style="left:1286px;width:40px">20:05</div><div class="c" style="left:1326px;width:50px"></div></div><div class="r y1" style="top:214px;width:1400px"><div class="c R" style="left:1px;width:30px">0</div><div class="c R" style="left:31px;width:40px">0</div><div class="c" style="left:71px;width:45px">OW</div><div class="c" style="left:116px;width:45px">LGW</div><div class="c" style="left:161px;width:45px">MCO</div><div class="c" style="left:206px;width:35px">Tue</div><div class="c" style="left:241px;width:65px">28/08/2018</div><div class="c" style="left:306px;width:40px">13:00</div><div class="c" style="left:346px;width:35px">Tue</div><div class="c" style="left:381px;width:70px"></div><div class="c" style="left:451px;width:40px"></div><div class="c R" style="left:491px;width:65px">580.00</div><div class="c R" style="left:556px;width:65px">580.00</div><div class="c R" style="left:621px;width:65px">1,160.00</div><div class="c" style="left:686px;width:65px">24/05/2017</div><div class="c" style="left:751px;width:85px">Virgin Atlantic...</div><div class="c" style="left:836px;width:45px">Y</div><div class="c" style="left:881px;width:45px">?</div><div class="c" style="left:926px;width:85px">Advanced Reg</div><div class="c R" style="left:1011px;width:65px">580.00</div><div class="c" style="left:1076px;width:40px">COM</div><div class="c R" style="left:1116px;width:60px"></div><div class="c" style="left:1176px;width:110px"></div><div class="c" style="left:1286px;width:40px">20:05</div><div class="c" style="left:1326px;width:50px"></div></div><div class="r y1" style="top:229px;width:1400px"><div class="c R" style="left:1px;width:30px">0</div><div class="c R" style="left:31px;width:40px">0</div><div class="c" style="left:71px;width:45px">OW</div><div class="c" style="left:116px;width:45px">LGW</div><div class="c" style="left:161px;width:45px">MCO</div><div class="c" style="left:206px;width:35px">Wed</div><div class="c" style="left:241px;width:65px">29/08/2018</div><div class="c" style="left:306px;width:40px">13:00</div><div class="c" style="left:346px;width:35px">Wed</div><div class="c" style="left:381px;width:70px"></div><div class="c" style="left:451px;width:40px"></div><div class="c R" style="left:491px;width:65px">580.00</div><div class="c R" style="left:556px;width:65px">580.00</div><div class="c R" style="left:621px;width:65px">1,160.00</div><div class="c" style="left:686px;width:65px">24/05/2017</div><div class="c" style="left:751px;width:85px">Virgin Atlantic...</div><div class="c" style="left:836px;width:45px">Y</div><div class="c" style="left:881px;width:45px">?</div><div class="c" style="left:926px;width:85px">Advanced Reg</div><div class="c R" style="left:1011px;width:65px">580.00</div><div class="c" style="left:1076px;width:40px">COM</div><div class="c R" style="left:1116px;width:60px"></div><div class="c" style="left:1176px;width:110px"></div><div class="c" style="left:1286px;width:40px">20:05</div><div class="c" style="left:1326px;width:50px"></div></div><div class="r y1" style="top:244px;width:1400px"><div class="c R" style="left:1px;width:30px">0</div><div class="c R" style="left:31px;width:40px">0</div><div class="c" style="left:71px;width:45px">OW</div><div class="c" style="left:116px;width:45px">LGW</div><div class="c" style="left:161px;width:45px">MCO</div><div class="c" style="left:206px;width:35px">Tue</div><div class="c" style="left:241px;width:65px">11/09/2018</div><div class="c" style="left:306px;width:40px">13:00</div><div class="c" style="left:346px;width:35px">Tue</div><div class="c" style="left:381px;width:70px"></div><div class="c" style="left:451px;width:40px"></div><div class="c R" style="left:491px;width:65px">580.00</div><div class="c R" style="left:556px;width:65px">580.00</div><div class="c R" style="left:621px;width:65px">1,160.00</div><div class="c" style="left:686px;width:65px">24/05/2017</div><div class="c" style="left:751px;width:85px">Virgin Atlantic...</div><div class="c" style="left:836px;width:45px">Y</div><div class="c" style="left:881px;width:45px">?</div><div class="c" style="left:926px;width:85px">Advanced Reg</div><div class="c R" style="left:1011px;width:65px">580.00</div><div class="c" style="left:1076px;width:40px">COM</div><div class="c R" style="left:1116px;width:60px"></div><div class="c" style="left:1176px;width:110px"></div><div class="c" style="left:1286px;width:40px">20:05</div><div class="c" style="left:1326px;width:50px"></div></div><div class="r y1" style="top:259px;width:1400px"><div class="c R" style="left:1px;width:30px">0</div><div class="c R" style="left:31px;width:40px">0</div><div class="c" style="left:71px;width:45px">OW</div><div class="c" style="left:116px;width:45px">LGW</div><div class="c" style="left:161px;width:45px">MCO</div><div class="c" style="left:206px;width:35px">Tue</div><div class="c" style="left:241px;width:65px">09/10/2018</div><div class="c" style="left:306px;width:40px">13:00</div><div class="c" style="left:346px;width:35px">Tue</div><div class="c" style="left:381px;width:70px"></div><div class="c" style="left:451px;width:40px"></div><div class="c R" style="left:491px;width:65px">580.00</div><div class="c R" style="left:556px;width:65px">580.00</div><div class="c R" style="left:621px;width:65px">1,160.00</div><div class="c" style="left:686px;width:65px">24/05/2017</div><div class="c" style="left:751px;width:85px">Virgin Atlantic...</div><div class="c" style="left:836px;width:45px">Y</div><div class="c" style="left:881px;width:45px">?</div><div class="c" style="left:926px;width:85px">Advanced Reg</div><div class="c R" style="left:1011px;width:65px">580.00</div><div class="c" style="left:1076px;width:40px">COM</div><div class="c R" style="left:1116px;width:60px"></div><div class="c" style="left:1176px;width:110px"></div><div class="c" style="left:1286px;width:40px">20:05</div><div class="c" style="left:1326px;width:50px"></div></div></div><div class="trk" style="left:1572px;top:156px;width:16px;height:273px"></div><div class="a" style="left:1572px;top:156px;width:16px;height:16px;background:#d4d0c8;box-shadow:inset -1px -1px 0 #404040, inset 1px 1px 0 #d4d0c8, inset -2px -2px 0 #808080, inset 2px 2px 0 #fff"></div><svg class="a" style="left:0;top:0;width:1600px;height:860px;pointer-events:none;overflow:visible" width="1600" height="860"><path d="M1576 166 H1584 L1580 162Z" fill="#000"/></svg><div class="a" style="left:1572px;top:413px;width:16px;height:16px;background:#d4d0c8;box-shadow:inset -1px -1px 0 #404040, inset 1px 1px 0 #d4d0c8, inset -2px -2px 0 #808080, inset 2px 2px 0 #fff"></div><svg class="a" style="left:0;top:0;width:1600px;height:860px;pointer-events:none;overflow:visible" width="1600" height="860"><path d="M1576 419 H1584 L1580 423Z" fill="#000"/></svg><div class="a" style="left:1572px;top:172px;width:16px;height:64px;background:#d4d0c8;box-shadow:inset -1px -1px 0 #404040, inset 1px 1px 0 #d4d0c8, inset -2px -2px 0 #808080, inset 2px 2px 0 #fff"></div><div class="trk" style="left:219px;top:429px;width:1353px;height:16px"></div><div class="a" style="left:219px;top:429px;width:16px;height:16px;background:#d4d0c8;box-shadow:inset -1px -1px 0 #404040, inset 1px 1px 0 #d4d0c8, inset -2px -2px 0 #808080, inset 2px 2px 0 #fff"></div><svg class="a" style="left:0;top:0;width:1600px;height:860px;pointer-events:none;overflow:visible" width="1600" height="860"><path d="M228 433 V441 L224 437Z" fill="#000"/></svg><div class="a" style="left:235px;top:429px;width:1270px;height:16px;background:#d4d0c8;box-shadow:inset -1px -1px 0 #404040, inset 1px 1px 0 #d4d0c8, inset -2px -2px 0 #808080, inset 2px 2px 0 #fff"></div><div class="a" style="left:1556px;top:429px;width:16px;height:16px;background:#d4d0c8;box-shadow:inset -1px -1px 0 #404040, inset 1px 1px 0 #d4d0c8, inset -2px -2px 0 #808080, inset 2px 2px 0 #fff"></div><svg class="a" style="left:0;top:0;width:1600px;height:860px;pointer-events:none;overflow:visible" width="1600" height="860"><path d="M1563 433 V441 L1567 437Z" fill="#000"/></svg><div class="a" style="left:1572px;top:429px;width:16px;height:16px;background:#d4d0c8"></div><div class="a" style="left:217px;top:471px;width:1373px;height:293px;background:#fff;box-shadow:inset 1px 1px 0 #808080, inset -1px -1px 0 #fff, inset 2px 2px 0 #404040, inset -2px -2px 0 #d4d0c8"></div><div class="g" style="left:219px;top:473px;width:1353px;height:273px"><div class="a" style="left:1px;top:0;width:30px;height:19px;background:#d4d0c8;box-shadow:inset -1px -1px 0 #6a6a6a, inset -2px -2px 0 #b4b0a8, inset 1px 2px 0 #fff;text-align:right;line-height:18px;padding:1px 3px 0 1px;white-space:nowrap;overflow:hidden">N</div><div class="a" style="left:31px;top:0;width:40px;height:19px;background:#d4d0c8;box-shadow:inset -1px -1px 0 #6a6a6a, inset -2px -2px 0 #b4b0a8, inset 1px 2px 0 #fff;text-align:right;line-height:18px;padding:1px 3px 0 1px;white-space:nowrap;overflow:hidden">STP1</div><div class="a" style="left:71px;top:0;width:40px;height:19px;background:#d4d0c8;box-shadow:inset -1px -1px 0 #6a6a6a, inset -2px -2px 0 #b4b0a8, inset 1px 2px 0 #fff;text-align:right;line-height:18px;padding:1px 3px 0 1px;white-space:nowrap;overflow:hidden">STP2</div><div class="a" style="left:111px;top:0;width:45px;height:19px;background:#d4d0c8;box-shadow:inset -1px -1px 0 #6a6a6a, inset -2px -2px 0 #b4b0a8, inset 1px 2px 0 #fff;line-height:18px;padding:1px 3px 0 1px;white-space:nowrap;overflow:hidden">Flt Type</div><div class="a" style="left:156px;top:0;width:45px;height:19px;background:#d4d0c8;box-shadow:inset -1px -1px 0 #6a6a6a, inset -2px -2px 0 #b4b0a8, inset 1px 2px 0 #fff;line-height:18px;padding:1px 3px 0 1px;white-space:nowrap;overflow:hidden">Dep</div><div class="a" style="left:201px;top:0;width:45px;height:19px;background:#d4d0c8;box-shadow:inset -1px -1px 0 #6a6a6a, inset -2px -2px 0 #b4b0a8, inset 1px 2px 0 #fff;line-height:18px;padding:1px 3px 0 1px;white-space:nowrap;overflow:hidden">Arv</div><div class="a" style="left:246px;top:0;width:35px;height:19px;background:#d4d0c8;box-shadow:inset -1px -1px 0 #6a6a6a, inset -2px -2px 0 #b4b0a8, inset 1px 2px 0 #fff;line-height:18px;padding:1px 3px 0 1px;white-space:nowrap;overflow:hidden">DOW</div><div class="a" style="left:281px;top:0;width:65px;height:19px;background:#d4d0c8;box-shadow:inset -1px -1px 0 #6a6a6a, inset -2px -2px 0 #b4b0a8, inset 1px 2px 0 #fff;line-height:18px;padding:1px 3px 0 1px;white-space:nowrap;overflow:hidden">OB Dep D...</div><div class="a" style="left:346px;top:0;width:40px;height:19px;background:#d4d0c8;box-shadow:inset -1px -1px 0 #6a6a6a, inset -2px -2px 0 #b4b0a8, inset 1px 2px 0 #fff;line-height:18px;padding:1px 3px 0 1px;white-space:nowrap;overflow:hidden">Time</div><div class="a" style="left:386px;top:0;width:35px;height:19px;background:#d4d0c8;box-shadow:inset -1px -1px 0 #6a6a6a, inset -2px -2px 0 #b4b0a8, inset 1px 2px 0 #fff;line-height:18px;padding:1px 3px 0 1px;white-space:nowrap;overflow:hidden">DOW</div><div class="a" style="left:421px;top:0;width:70px;height:19px;background:#d4d0c8;box-shadow:inset -1px -1px 0 #6a6a6a, inset -2px -2px 0 #b4b0a8, inset 1px 2px 0 #fff;line-height:18px;padding:1px 3px 0 1px;white-space:nowrap;overflow:hidden">IB Dep Date</div><div class="a" style="left:491px;top:0;width:40px;height:19px;background:#d4d0c8;box-shadow:inset -1px -1px 0 #6a6a6a, inset -2px -2px 0 #b4b0a8, inset 1px 2px 0 #fff;line-height:18px;padding:1px 3px 0 1px;white-space:nowrap;overflow:hidden">Time</div><div class="a" style="left:531px;top:0;width:65px;height:19px;background:#d4d0c8;box-shadow:inset -1px -1px 0 #6a6a6a, inset -2px -2px 0 #b4b0a8, inset 1px 2px 0 #fff;text-align:right;line-height:18px;padding:1px 3px 0 1px;white-space:nowrap;overflow:hidden">AdAC</div><div class="a" style="left:596px;top:0;width:65px;height:19px;background:#d4d0c8;box-shadow:inset -1px -1px 0 #6a6a6a, inset -2px -2px 0 #b4b0a8, inset 1px 2px 0 #fff;text-align:right;line-height:18px;padding:1px 3px 0 1px;white-space:nowrap;overflow:hidden">Price</div><div class="a" style="left:661px;top:0;width:65px;height:19px;background:#d4d0c8;box-shadow:inset -1px -1px 0 #6a6a6a, inset -2px -2px 0 #b4b0a8, inset 1px 2px 0 #fff;text-align:right;line-height:18px;padding:1px 12px 0 1px;white-space:nowrap;overflow:hidden">Basket</div><svg class="a" style="left:716px;top:7px" width="8" height="6"><path d="M0 0 H7 L3.5 4Z" fill="#a0a0a0"/></svg><div class="a" style="left:726px;top:0;width:65px;height:19px;background:#d4d0c8;box-shadow:inset -1px -1px 0 #6a6a6a, inset -2px -2px 0 #b4b0a8, inset 1px 2px 0 #fff;line-height:18px;padding:1px 3px 0 1px;white-space:nowrap;overflow:hidden">Updated</div><div class="a" style="left:791px;top:0;width:85px;height:19px;background:#d4d0c8;box-shadow:inset -1px -1px 0 #6a6a6a, inset -2px -2px 0 #b4b0a8, inset 1px 2px 0 #fff;line-height:18px;padding:1px 3px 0 1px;white-space:nowrap;overflow:hidden">Carrier</div><div class="a" style="left:876px;top:0;width:45px;height:19px;background:#d4d0c8;box-shadow:inset -1px -1px 0 #6a6a6a, inset -2px -2px 0 #b4b0a8, inset 1px 2px 0 #fff;line-height:18px;padding:1px 3px 0 1px;white-space:nowrap;overflow:hidden">Cabin</div><div class="a" style="left:921px;top:0;width:45px;height:19px;background:#d4d0c8;box-shadow:inset -1px -1px 0 #6a6a6a, inset -2px -2px 0 #b4b0a8, inset 1px 2px 0 #fff;line-height:18px;padding:1px 3px 0 1px;white-space:nowrap;overflow:hidden">B.C.</div><div class="a" style="left:966px;top:0;width:85px;height:19px;background:#d4d0c8;box-shadow:inset -1px -1px 0 #6a6a6a, inset -2px -2px 0 #b4b0a8, inset 1px 2px 0 #fff;line-height:18px;padding:1px 3px 0 1px;white-space:nowrap;overflow:hidden">Supplier</div><div class="a" style="left:1051px;top:0;width:65px;height:19px;background:#d4d0c8;box-shadow:inset -1px -1px 0 #6a6a6a, inset -2px -2px 0 #b4b0a8, inset 1px 2px 0 #fff;text-align:right;line-height:18px;padding:1px 3px 0 1px;white-space:nowrap;overflow:hidden">AdPP</div><div class="a" style="left:1116px;top:0;width:40px;height:19px;background:#d4d0c8;box-shadow:inset -1px -1px 0 #6a6a6a, inset -2px -2px 0 #b4b0a8, inset 1px 2px 0 #fff;line-height:18px;padding:1px 3px 0 1px;white-space:nowrap;overflow:hidden">Type</div><div class="a" style="left:1156px;top:0;width:60px;height:19px;background:#d4d0c8;box-shadow:inset -1px -1px 0 #6a6a6a, inset -2px -2px 0 #b4b0a8, inset 1px 2px 0 #fff;text-align:right;line-height:18px;padding:1px 3px 0 1px;white-space:nowrap;overflow:hidden">Priority</div><div class="a" style="left:1216px;top:0;width:110px;height:19px;background:#d4d0c8;box-shadow:inset -1px -1px 0 #6a6a6a, inset -2px -2px 0 #b4b0a8, inset 1px 2px 0 #fff;line-height:18px;padding:1px 3px 0 1px;white-space:nowrap;overflow:hidden">Priority description</div><div class="a" style="left:1326px;top:0;width:40px;height:19px;background:#d4d0c8;box-shadow:inset -1px -1px 0 #6a6a6a, inset -2px -2px 0 #b4b0a8, inset 1px 2px 0 #fff;line-height:18px;padding:1px 3px 0 1px;white-space:nowrap;overflow:hidden">Time</div><div class="r y2" style="top:19px;width:1400px"><div class="c R" style="left:1px;width:30px">14</div><div class="c R" style="left:31px;width:40px">0</div><div class="c R" style="left:71px;width:40px">0</div><div class="c" style="left:111px;width:45px">RTN</div><div class="c" style="left:156px;width:45px">LGW</div><div class="c" style="left:201px;width:45px">MCO</div><div class="c" style="left:246px;width:35px">Fri</div><div class="c" style="left:281px;width:65px">05/10/2018</div><div class="c" style="left:346px;width:40px">12:55</div><div class="c" style="left:386px;width:35px">Sat</div><div class="c" style="left:421px;width:70px">19/10/2018</div><div class="c" style="left:491px;width:40px">17:55</div><div class="c R" style="left:531px;width:65px">-</div><div class="c R" style="left:596px;width:65px">900.00</div><div class="c R" style="left:661px;width:65px">900.00</div><div class="c" style="left:726px;width:65px">24/05/2017</div><div class="c" style="left:791px;width:85px">Thomas Cook ...</div><div class="c" style="left:876px;width:45px">Y</div><div class="c" style="left:921px;width:45px">?-?</div><div class="c" style="left:966px;width:85px">Advanced Reg</div><div class="c R" style="left:1051px;width:65px">-</div><div class="c" style="left:1116px;width:40px">COM</div><div class="c R" style="left:1156px;width:60px"></div><div class="c" style="left:1216px;width:110px"></div><div class="c" style="left:1326px;width:40px">20:05</div></div><div class="r y2" style="top:34px;width:1400px"><div class="c R" style="left:1px;width:30px">14</div><div class="c R" style="left:31px;width:40px">0</div><div class="c R" style="left:71px;width:40px">0</div><div class="c" style="left:111px;width:45px">RTN</div><div class="c" style="left:156px;width:45px">LGW</div><div class="c" style="left:201px;width:45px">MCO</div><div class="c" style="left:246px;width:35px">Wed</div><div class="c" style="left:281px;width:65px">26/09/2018</div><div class="c" style="left:346px;width:40px">12:55</div><div class="c" style="left:386px;width:35px">Thu</div><div class="c" style="left:421px;width:70px">10/10/2018</div><div class="c" style="left:491px;width:40px">17:55</div><div class="c R" style="left:531px;width:65px">-</div><div class="c R" style="left:596px;width:65px">900.00</div><div class="c R" style="left:661px;width:65px">900.00</div><div class="c" style="left:726px;width:65px">24/05/2017</div><div class="c" style="left:791px;width:85px">Thomas Cook ...</div><div class="c" style="left:876px;width:45px">Y</div><div class="c" style="left:921px;width:45px">?-?</div><div class="c" style="left:966px;width:85px">Advanced Reg</div><div class="c R" style="left:1051px;width:65px">-</div><div class="c" style="left:1116px;width:40px">COM</div><div class="c R" style="left:1156px;width:60px"></div><div class="c" style="left:1216px;width:110px"></div><div class="c" style="left:1326px;width:40px">20:05</div></div><div class="r y2" style="top:49px;width:1400px"><div class="c R" style="left:1px;width:30px">14</div><div class="c R" style="left:31px;width:40px">0</div><div class="c R" style="left:71px;width:40px">0</div><div class="c" style="left:111px;width:45px">RTN</div><div class="c" style="left:156px;width:45px">LGW</div><div class="c" style="left:201px;width:45px">MCO</div><div class="c" style="left:246px;width:35px">Wed</div><div class="c" style="left:281px;width:65px">12/09/2018</div><div class="c" style="left:346px;width:40px">12:55</div><div class="c" style="left:386px;width:35px">Thu</div><div class="c" style="left:421px;width:70px">26/09/2018</div><div class="c" style="left:491px;width:40px">17:55</div><div class="c R" style="left:531px;width:65px">-</div><div class="c R" style="left:596px;width:65px">900.00</div><div class="c R" style="left:661px;width:65px">900.00</div><div class="c" style="left:726px;width:65px">24/05/2017</div><div class="c" style="left:791px;width:85px">Thomas Cook ...</div><div class="c" style="left:876px;width:45px">Y</div><div class="c" style="left:921px;width:45px">?-?</div><div class="c" style="left:966px;width:85px">Advanced Reg</div><div class="c R" style="left:1051px;width:65px">-</div><div class="c" style="left:1116px;width:40px">COM</div><div class="c R" style="left:1156px;width:60px"></div><div class="c" style="left:1216px;width:110px"></div><div class="c" style="left:1326px;width:40px">20:05</div></div><div class="r y2" style="top:64px;width:1400px"><div class="c R" style="left:1px;width:30px">14</div><div class="c R" style="left:31px;width:40px">1</div><div class="c R" style="left:71px;width:40px">1</div><div class="c" style="left:111px;width:45px">RTN</div><div class="c" style="left:156px;width:45px">LHR|1</div><div class="c" style="left:201px;width:45px">MCO|1</div><div class="c" style="left:246px;width:35px">Fri</div><div class="c" style="left:281px;width:65px">07/09/2018</div><div class="c" style="left:346px;width:40px">07:30</div><div class="c" style="left:386px;width:35px">Sat</div><div class="c" style="left:421px;width:70px">21/09/2018</div><div class="c" style="left:491px;width:40px">13:45</div><div class="c R" style="left:531px;width:65px">-</div><div class="c R" style="left:596px;width:65px">1,000.00</div><div class="c R" style="left:661px;width:65px">1,000.00</div><div class="c" style="left:726px;width:65px">24/05/2017</div><div class="c" style="left:791px;width:85px">United Airlines</div><div class="c" style="left:876px;width:45px">Y</div><div class="c" style="left:921px;width:45px">??-??</div><div class="c" style="left:966px;width:85px">Advanced Reg</div><div class="c R" style="left:1051px;width:65px">-</div><div class="c" style="left:1116px;width:40px">COM</div><div class="c R" style="left:1156px;width:60px"></div><div class="c" style="left:1216px;width:110px"></div><div class="c" style="left:1326px;width:40px">20:05</div></div><div class="r y2" style="top:79px;width:1400px"><div class="c R" style="left:1px;width:30px">14</div><div class="c R" style="left:31px;width:40px">1</div><div class="c R" style="left:71px;width:40px">1</div><div class="c" style="left:111px;width:45px">RTN</div><div class="c" style="left:156px;width:45px">LHR|1</div><div class="c" style="left:201px;width:45px">MCO|1</div><div class="c" style="left:246px;width:35px">Sun</div><div class="c" style="left:281px;width:65px">07/10/2018</div><div class="c" style="left:346px;width:40px">07:30</div><div class="c" style="left:386px;width:35px">Mon</div><div class="c" style="left:421px;width:70px">21/10/2018</div><div class="c" style="left:491px;width:40px">13:45</div><div class="c R" style="left:531px;width:65px">-</div><div class="c R" style="left:596px;width:65px">1,000.00</div><div class="c R" style="left:661px;width:65px">1,000.00</div><div class="c" style="left:726px;width:65px">24/05/2017</div><div class="c" style="left:791px;width:85px">United Airlines</div><div class="c" style="left:876px;width:45px">Y</div><div class="c" style="left:921px;width:45px">??-??</div><div class="c" style="left:966px;width:85px">Advanced Reg</div><div class="c R" style="left:1051px;width:65px">-</div><div class="c" style="left:1116px;width:40px">COM</div><div class="c R" style="left:1156px;width:60px"></div><div class="c" style="left:1216px;width:110px"></div><div class="c" style="left:1326px;width:40px">20:05</div></div><div class="r y1" style="top:94px;width:1400px"><div class="c R" style="left:1px;width:30px">0</div><div class="c R" style="left:31px;width:40px">0</div><div class="c R" style="left:71px;width:40px">0</div><div class="c" style="left:111px;width:45px">OW</div><div class="c" style="left:156px;width:45px">MCO</div><div class="c" style="left:201px;width:45px">LGW</div><div class="c" style="left:246px;width:35px">Tue</div><div class="c" style="left:281px;width:65px">02/10/2018</div><div class="c" style="left:346px;width:40px">19:30</div><div class="c" style="left:386px;width:35px">Wed</div><div class="c" style="left:421px;width:70px"></div><div class="c" style="left:491px;width:40px"></div><div class="c R" style="left:531px;width:65px">580.00</div><div class="c R" style="left:596px;width:65px">580.00</div><div class="c R" style="left:661px;width:65px">1,160.00</div><div class="c" style="left:726px;width:65px">24/05/2017</div><div class="c" style="left:791px;width:85px">Virgin Atlantic...</div><div class="c" style="left:876px;width:45px">Y</div><div class="c" style="left:921px;width:45px">?</div><div class="c" style="left:966px;width:85px">Advanced Reg</div><div class="c R" style="left:1051px;width:65px">580.00</div><div class="c" style="left:1116px;width:40px">COM</div><div class="c R" style="left:1156px;width:60px"></div><div class="c" style="left:1216px;width:110px"></div><div class="c" style="left:1326px;width:40px">20:05</div></div><div class="r y1" style="top:109px;width:1400px"><div class="c R" style="left:1px;width:30px">0</div><div class="c R" style="left:31px;width:40px">0</div><div class="c R" style="left:71px;width:40px">0</div><div class="c" style="left:111px;width:45px">OW</div><div class="c" style="left:156px;width:45px">MCO</div><div class="c" style="left:201px;width:45px">LGW</div><div class="c" style="left:246px;width:35px">Mon</div><div class="c" style="left:281px;width:65px">08/10/2018</div><div class="c" style="left:346px;width:40px">19:30</div><div class="c" style="left:386px;width:35px">Tue</div><div class="c" style="left:421px;width:70px"></div><div class="c" style="left:491px;width:40px"></div><div class="c R" style="left:531px;width:65px">580.00</div><div class="c R" style="left:596px;width:65px">580.00</div><div class="c R" style="left:661px;width:65px">1,160.00</div><div class="c" style="left:726px;width:65px">24/05/2017</div><div class="c" style="left:791px;width:85px">Virgin Atlantic...</div><div class="c" style="left:876px;width:45px">Y</div><div class="c" style="left:921px;width:45px">?</div><div class="c" style="left:966px;width:85px">Advanced Reg</div><div class="c R" style="left:1051px;width:65px">580.00</div><div class="c" style="left:1116px;width:40px">COM</div><div class="c R" style="left:1156px;width:60px"></div><div class="c" style="left:1216px;width:110px"></div><div class="c" style="left:1326px;width:40px">20:05</div></div><div class="r y1" style="top:124px;width:1400px"><div class="c R" style="left:1px;width:30px">0</div><div class="c R" style="left:31px;width:40px">0</div><div class="c R" style="left:71px;width:40px">0</div><div class="c" style="left:111px;width:45px">OW</div><div class="c" style="left:156px;width:45px">MCO</div><div class="c" style="left:201px;width:45px">LGW</div><div class="c" style="left:246px;width:35px">Tue</div><div class="c" style="left:281px;width:65px">16/10/2018</div><div class="c" style="left:346px;width:40px">19:30</div><div class="c" style="left:386px;width:35px">Wed</div><div class="c" style="left:421px;width:70px"></div><div class="c" style="left:491px;width:40px"></div><div class="c R" style="left:531px;width:65px">580.00</div><div class="c R" style="left:596px;width:65px">580.00</div><div class="c R" style="left:661px;width:65px">1,160.00</div><div class="c" style="left:726px;width:65px">24/05/2017</div><div class="c" style="left:791px;width:85px">Virgin Atlantic...</div><div class="c" style="left:876px;width:45px">Y</div><div class="c" style="left:921px;width:45px">?</div><div class="c" style="left:966px;width:85px">Advanced Reg</div><div class="c R" style="left:1051px;width:65px">580.00</div><div class="c" style="left:1116px;width:40px">COM</div><div class="c R" style="left:1156px;width:60px"></div><div class="c" style="left:1216px;width:110px"></div><div class="c" style="left:1326px;width:40px">20:05</div></div><div class="r y1" style="top:139px;width:1400px"><div class="c R" style="left:1px;width:30px">0</div><div class="c R" style="left:31px;width:40px">0</div><div class="c R" style="left:71px;width:40px">0</div><div class="c" style="left:111px;width:45px">OW</div><div class="c" style="left:156px;width:45px">MCO</div><div class="c" style="left:201px;width:45px">LGW</div><div class="c" style="left:246px;width:35px">Thu</div><div class="c" style="left:281px;width:65px">18/10/2018</div><div class="c" style="left:346px;width:40px">19:30</div><div class="c" style="left:386px;width:35px">Fri</div><div class="c" style="left:421px;width:70px"></div><div class="c" style="left:491px;width:40px"></div><div class="c R" style="left:531px;width:65px">580.00</div><div class="c R" style="left:596px;width:65px">580.00</div><div class="c R" style="left:661px;width:65px">1,160.00</div><div class="c" style="left:726px;width:65px">24/05/2017</div><div class="c" style="left:791px;width:85px">Virgin Atlantic...</div><div class="c" style="left:876px;width:45px">Y</div><div class="c" style="left:921px;width:45px">?</div><div class="c" style="left:966px;width:85px">Advanced Reg</div><div class="c R" style="left:1051px;width:65px">580.00</div><div class="c" style="left:1116px;width:40px">COM</div><div class="c R" style="left:1156px;width:60px"></div><div class="c" style="left:1216px;width:110px"></div><div class="c" style="left:1326px;width:40px">20:05</div></div><div class="r y1" style="top:154px;width:1400px"><div class="c R" style="left:1px;width:30px">0</div><div class="c R" style="left:31px;width:40px">0</div><div class="c R" style="left:71px;width:40px">0</div><div class="c" style="left:111px;width:45px">OW</div><div class="c" style="left:156px;width:45px">MCO</div><div class="c" style="left:201px;width:45px">LGW</div><div class="c" style="left:246px;width:35px">Thu</div><div class="c" style="left:281px;width:65px">04/10/2018</div><div class="c" style="left:346px;width:40px">19:30</div><div class="c" style="left:386px;width:35px">Fri</div><div class="c" style="left:421px;width:70px"></div><div class="c" style="left:491px;width:40px"></div><div class="c R" style="left:531px;width:65px">580.00</div><div class="c R" style="left:596px;width:65px">580.00</div><div class="c R" style="left:661px;width:65px">1,160.00</div><div class="c" style="left:726px;width:65px">24/05/2017</div><div class="c" style="left:791px;width:85px">Virgin Atlantic...</div><div class="c" style="left:876px;width:45px">Y</div><div class="c" style="left:921px;width:45px">?</div><div class="c" style="left:966px;width:85px">Advanced Reg</div><div class="c R" style="left:1051px;width:65px">580.00</div><div class="c" style="left:1116px;width:40px">COM</div><div class="c R" style="left:1156px;width:60px"></div><div class="c" style="left:1216px;width:110px"></div><div class="c" style="left:1326px;width:40px">20:05</div></div><div class="r y1" style="top:169px;width:1400px"><div class="c R" style="left:1px;width:30px">0</div><div class="c R" style="left:31px;width:40px">0</div><div class="c R" style="left:71px;width:40px">0</div><div class="c" style="left:111px;width:45px">OW</div><div class="c" style="left:156px;width:45px">MCO</div><div class="c" style="left:201px;width:45px">LGW</div><div class="c" style="left:246px;width:35px">Tue</div><div class="c" style="left:281px;width:65px">09/10/2018</div><div class="c" style="left:346px;width:40px">19:30</div><div class="c" style="left:386px;width:35px">Wed</div><div class="c" style="left:421px;width:70px"></div><div class="c" style="left:491px;width:40px"></div><div class="c R" style="left:531px;width:65px">580.00</div><div class="c R" style="left:596px;width:65px">580.00</div><div class="c R" style="left:661px;width:65px">1,160.00</div><div class="c" style="left:726px;width:65px">24/05/2017</div><div class="c" style="left:791px;width:85px">Virgin Atlantic...</div><div class="c" style="left:876px;width:45px">Y</div><div class="c" style="left:921px;width:45px">?</div><div class="c" style="left:966px;width:85px">Advanced Reg</div><div class="c R" style="left:1051px;width:65px">580.00</div><div class="c" style="left:1116px;width:40px">COM</div><div class="c R" style="left:1156px;width:60px"></div><div class="c" style="left:1216px;width:110px"></div><div class="c" style="left:1326px;width:40px">20:05</div></div><div class="r s2" style="top:184px;width:1400px"><div class="c R" style="left:1px;width:30px">0</div><div class="c R" style="left:31px;width:40px">0</div><div class="c R" style="left:71px;width:40px">0</div><div class="c" style="left:111px;width:45px">OW</div><div class="c" style="left:156px;width:45px">MCO</div><div class="c" style="left:201px;width:45px">LGW</div><div class="c" style="left:246px;width:35px">Mon</div><div class="c" style="left:281px;width:65px">15/10/2018</div><div class="c" style="left:346px;width:40px">19:30</div><div class="c" style="left:386px;width:35px">Tue</div><div class="c" style="left:421px;width:70px"></div><div class="c" style="left:491px;width:40px"></div><div class="c R" style="left:531px;width:65px">580.00</div><div class="c R" style="left:596px;width:65px">580.00</div><div class="c R" style="left:661px;width:65px">1,160.00</div><div class="c" style="left:726px;width:65px">24/05/2017</div><div class="c" style="left:791px;width:85px">Virgin Atlantic...</div><div class="c" style="left:876px;width:45px">Y</div><div class="c" style="left:921px;width:45px">?</div><div class="c" style="left:966px;width:85px">Advanced Reg</div><div class="c R" style="left:1051px;width:65px">580.00</div><div class="c" style="left:1116px;width:40px">COM</div><div class="c R" style="left:1156px;width:60px"></div><div class="c" style="left:1216px;width:110px"></div><div class="c" style="left:1326px;width:40px">20:05</div></div><div class="r y1" style="top:199px;width:1400px"><div class="c R" style="left:1px;width:30px">0</div><div class="c R" style="left:31px;width:40px">0</div><div class="c R" style="left:71px;width:40px">0</div><div class="c" style="left:111px;width:45px">OW</div><div class="c" style="left:156px;width:45px">MCO</div><div class="c" style="left:201px;width:45px">LGW</div><div class="c" style="left:246px;width:35px">Wed</div><div class="c" style="left:281px;width:65px">24/10/2018</div><div class="c" style="left:346px;width:40px">19:30</div><div class="c" style="left:386px;width:35px">Thu</div><div class="c" style="left:421px;width:70px"></div><div class="c" style="left:491px;width:40px"></div><div class="c R" style="left:531px;width:65px">580.00</div><div class="c R" style="left:596px;width:65px">580.00</div><div class="c R" style="left:661px;width:65px">1,160.00</div><div class="c" style="left:726px;width:65px">24/05/2017</div><div class="c" style="left:791px;width:85px">Virgin Atlantic...</div><div class="c" style="left:876px;width:45px">Y</div><div class="c" style="left:921px;width:45px">?</div><div class="c" style="left:966px;width:85px">Advanced Reg</div><div class="c R" style="left:1051px;width:65px">580.00</div><div class="c" style="left:1116px;width:40px">COM</div><div class="c R" style="left:1156px;width:60px"></div><div class="c" style="left:1216px;width:110px"></div><div class="c" style="left:1326px;width:40px">20:05</div></div><div class="r y1" style="top:214px;width:1400px"><div class="c R" style="left:1px;width:30px">0</div><div class="c R" style="left:31px;width:40px">0</div><div class="c R" style="left:71px;width:40px">0</div><div class="c" style="left:111px;width:45px">OW</div><div class="c" style="left:156px;width:45px">MCO</div><div class="c" style="left:201px;width:45px">LGW</div><div class="c" style="left:246px;width:35px">Wed</div><div class="c" style="left:281px;width:65px">03/10/2018</div><div class="c" style="left:346px;width:40px">19:30</div><div class="c" style="left:386px;width:35px">Thu</div><div class="c" style="left:421px;width:70px"></div><div class="c" style="left:491px;width:40px"></div><div class="c R" style="left:531px;width:65px">580.00</div><div class="c R" style="left:596px;width:65px">580.00</div><div class="c R" style="left:661px;width:65px">1,160.00</div><div class="c" style="left:726px;width:65px">24/05/2017</div><div class="c" style="left:791px;width:85px">Virgin Atlantic...</div><div class="c" style="left:876px;width:45px">Y</div><div class="c" style="left:921px;width:45px">?</div><div class="c" style="left:966px;width:85px">Advanced Reg</div><div class="c R" style="left:1051px;width:65px">580.00</div><div class="c" style="left:1116px;width:40px">COM</div><div class="c R" style="left:1156px;width:60px"></div><div class="c" style="left:1216px;width:110px"></div><div class="c" style="left:1326px;width:40px">20:05</div></div><div class="r y1" style="top:229px;width:1400px"><div class="c R" style="left:1px;width:30px">0</div><div class="c R" style="left:31px;width:40px">0</div><div class="c R" style="left:71px;width:40px">0</div><div class="c" style="left:111px;width:45px">OW</div><div class="c" style="left:156px;width:45px">MCO</div><div class="c" style="left:201px;width:45px">LGW</div><div class="c" style="left:246px;width:35px">Wed</div><div class="c" style="left:281px;width:65px">10/10/2018</div><div class="c" style="left:346px;width:40px">19:30</div><div class="c" style="left:386px;width:35px">Thu</div><div class="c" style="left:421px;width:70px"></div><div class="c" style="left:491px;width:40px"></div><div class="c R" style="left:531px;width:65px">580.00</div><div class="c R" style="left:596px;width:65px">580.00</div><div class="c R" style="left:661px;width:65px">1,160.00</div><div class="c" style="left:726px;width:65px">24/05/2017</div><div class="c" style="left:791px;width:85px">Virgin Atlantic...</div><div class="c" style="left:876px;width:45px">Y</div><div class="c" style="left:921px;width:45px">?</div><div class="c" style="left:966px;width:85px">Advanced Reg</div><div class="c R" style="left:1051px;width:65px">580.00</div><div class="c" style="left:1116px;width:40px">COM</div><div class="c R" style="left:1156px;width:60px"></div><div class="c" style="left:1216px;width:110px"></div><div class="c" style="left:1326px;width:40px">20:05</div></div><div class="r y1" style="top:244px;width:1400px"><div class="c R" style="left:1px;width:30px">0</div><div class="c R" style="left:31px;width:40px">0</div><div class="c R" style="left:71px;width:40px">0</div><div class="c" style="left:111px;width:45px">OW</div><div class="c" style="left:156px;width:45px">MCO</div><div class="c" style="left:201px;width:45px">LGW</div><div class="c" style="left:246px;width:35px">Thu</div><div class="c" style="left:281px;width:65px">11/10/2018</div><div class="c" style="left:346px;width:40px">19:30</div><div class="c" style="left:386px;width:35px">Fri</div><div class="c" style="left:421px;width:70px"></div><div class="c" style="left:491px;width:40px"></div><div class="c R" style="left:531px;width:65px">580.00</div><div class="c R" style="left:596px;width:65px">580.00</div><div class="c R" style="left:661px;width:65px">1,160.00</div><div class="c" style="left:726px;width:65px">24/05/2017</div><div class="c" style="left:791px;width:85px">Virgin Atlantic...</div><div class="c" style="left:876px;width:45px">Y</div><div class="c" style="left:921px;width:45px">?</div><div class="c" style="left:966px;width:85px">Advanced Reg</div><div class="c R" style="left:1051px;width:65px">580.00</div><div class="c" style="left:1116px;width:40px">COM</div><div class="c R" style="left:1156px;width:60px"></div><div class="c" style="left:1216px;width:110px"></div><div class="c" style="left:1326px;width:40px">20:05</div></div><div class="r y1" style="top:259px;width:1400px"><div class="c R" style="left:1px;width:30px">0</div><div class="c R" style="left:31px;width:40px">0</div><div class="c R" style="left:71px;width:40px">0</div><div class="c" style="left:111px;width:45px">OW</div><div class="c" style="left:156px;width:45px">MCO</div><div class="c" style="left:201px;width:45px">LGW</div><div class="c" style="left:246px;width:35px">Mon</div><div class="c" style="left:281px;width:65px">22/10/2018</div><div class="c" style="left:346px;width:40px">19:30</div><div class="c" style="left:386px;width:35px">Tue</div><div class="c" style="left:421px;width:70px"></div><div class="c" style="left:491px;width:40px"></div><div class="c R" style="left:531px;width:65px">580.00</div><div class="c R" style="left:596px;width:65px">580.00</div><div class="c R" style="left:661px;width:65px">1,160.00</div><div class="c" style="left:726px;width:65px">24/05/2017</div><div class="c" style="left:791px;width:85px">Virgin Atlantic...</div><div class="c" style="left:876px;width:45px">Y</div><div class="c" style="left:921px;width:45px">?</div><div class="c" style="left:966px;width:85px">Advanced Reg</div><div class="c R" style="left:1051px;width:65px">580.00</div><div class="c" style="left:1116px;width:40px">COM</div><div class="c R" style="left:1156px;width:60px"></div><div class="c" style="left:1216px;width:110px"></div><div class="c" style="left:1326px;width:40px">20:05</div></div></div><div class="trk" style="left:1572px;top:473px;width:16px;height:273px"></div><div class="a" style="left:1572px;top:473px;width:16px;height:16px;background:#d4d0c8;box-shadow:inset -1px -1px 0 #404040, inset 1px 1px 0 #d4d0c8, inset -2px -2px 0 #808080, inset 2px 2px 0 #fff"></div><svg class="a" style="left:0;top:0;width:1600px;height:860px;pointer-events:none;overflow:visible" width="1600" height="860"><path d="M1576 483 H1584 L1580 479Z" fill="#000"/></svg><div class="a" style="left:1572px;top:730px;width:16px;height:16px;background:#d4d0c8;box-shadow:inset -1px -1px 0 #404040, inset 1px 1px 0 #d4d0c8, inset -2px -2px 0 #808080, inset 2px 2px 0 #fff"></div><svg class="a" style="left:0;top:0;width:1600px;height:860px;pointer-events:none;overflow:visible" width="1600" height="860"><path d="M1576 736 H1584 L1580 740Z" fill="#000"/></svg><div class="a" style="left:1572px;top:510px;width:16px;height:52px;background:#d4d0c8;box-shadow:inset -1px -1px 0 #404040, inset 1px 1px 0 #d4d0c8, inset -2px -2px 0 #808080, inset 2px 2px 0 #fff"></div><div class="trk" style="left:219px;top:746px;width:1353px;height:16px"></div><div class="a" style="left:219px;top:746px;width:16px;height:16px;background:#d4d0c8;box-shadow:inset -1px -1px 0 #404040, inset 1px 1px 0 #d4d0c8, inset -2px -2px 0 #808080, inset 2px 2px 0 #fff"></div><svg class="a" style="left:0;top:0;width:1600px;height:860px;pointer-events:none;overflow:visible" width="1600" height="860"><path d="M228 750 V758 L224 754Z" fill="#000"/></svg><div class="a" style="left:235px;top:746px;width:1223px;height:16px;background:#d4d0c8;box-shadow:inset -1px -1px 0 #404040, inset 1px 1px 0 #d4d0c8, inset -2px -2px 0 #808080, inset 2px 2px 0 #fff"></div><div class="a" style="left:1556px;top:746px;width:16px;height:16px;background:#d4d0c8;box-shadow:inset -1px -1px 0 #404040, inset 1px 1px 0 #d4d0c8, inset -2px -2px 0 #808080, inset 2px 2px 0 #fff"></div><svg class="a" style="left:0;top:0;width:1600px;height:860px;pointer-events:none;overflow:visible" width="1600" height="860"><path d="M1563 750 V758 L1567 754Z" fill="#000"/></svg><div class="a" style="left:1572px;top:746px;width:16px;height:16px;background:#d4d0c8"></div><div class="t b" style="left:217px;top:133px;font-size:11px;letter-spacing:0.35px;-webkit-text-stroke:0.3px #000">LON-&gt;MCO Search results: 66/66</div><div class="a" style="left:217px;top:149px;width:1373px;height:2px;background:linear-gradient(90deg,#0a246a,#6a80b0 50%,#c0c4d0)"></div><div class="t b" style="left:217px;top:450px;font-size:11px;letter-spacing:0.35px;-webkit-text-stroke:0.3px #000">Return flights and MCO-&gt;LON Oneways Search results: 85/85</div><div class="a" style="left:217px;top:466px;width:1373px;height:2px;background:linear-gradient(90deg,#0a246a,#6a80b0 50%,#c0c4d0)"></div><div class="t" style="left:223px;top:782px">First portion: 3.8 sec, total search time: 20.8 sec</div><div class="a" style="left:466px;top:780px;width:162px;height:18px;border:1px solid #808080;border-right-color:#fff;border-bottom-color:#fff;background:#d4d0c8"></div><div class="a" style="left:493px;top:782px;width:39px;height:14px;background:#0a246a"></div><div class="a" style="left:1560px;top:778px;width:23px;height:22px;background:#d4d0c8;box-shadow:inset -1px -1px 0 #404040, inset -2px -2px 0 #808080, inset 1px 1px 0 #fff"></div><div class="t b" style="left:1567px;top:781px;color:#1a4aa0;font-size:15px;line-height:16px;font-family:'Liberation Serif',serif">i</div><div class="a" style="left:215px;top:805px;width:1378px;height:1px;background:#808080"></div><div class="a" style="left:267px;top:806px;width:1px;height:16px;background:#808080"></div><div class="t" style="left:218px;top:807px;letter-spacing:-0.4px">Summary</div><div class="a" style="left:308px;top:806px;width:1px;height:16px;background:#808080"></div><div class="t" style="left:271px;top:807px;letter-spacing:-0.4px">Search</div><div class="a" style="left:309px;top:805px;width:107px;height:17px;background:#0b8a0b;border-radius:2px"></div><div class="t" style="left:312px;top:807px;color:#fff;letter-spacing:-0.5px">Flt 2A LON MCO LON</div><div class="a" style="left:511px;top:806px;width:1px;height:16px;background:#808080"></div><div class="t" style="left:419px;top:807px;letter-spacing:-0.4px">Financial Summary</div><div class="t" style="left:783px;top:831px;letter-spacing:-0.2px">User: 531 - Nicole Kooner</div><div class="t" style="left:917px;top:831px;letter-spacing:-0.3px">Retailer: 'Ocean-Florida'</div><div class="t" style="left:1043px;top:831px;letter-spacing:-0.2px">Client: none</div><div class="t" style="left:1539px;top:831px;letter-spacing:-0.4px">20:05 GMT</div></body></html>
